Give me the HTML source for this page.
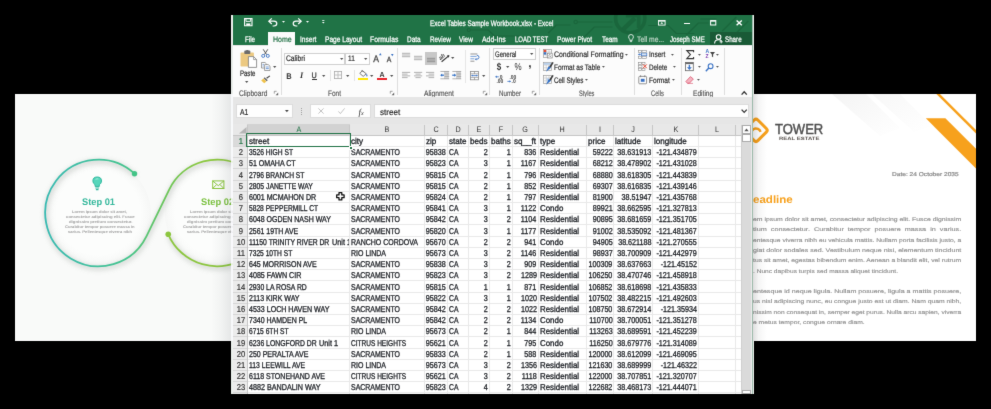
<!DOCTYPE html>
<html><head><meta charset="utf-8"><title>Excel Tables Sample Workbook</title>
<style>
html,body{margin:0;padding:0;background:#000;}
body{width:991px;height:409px;position:relative;overflow:hidden;font-family:"Liberation Sans", sans-serif;}
.t{position:absolute;white-space:nowrap;font-family:"Liberation Sans", sans-serif;text-rendering:geometricPrecision;}
.r{position:absolute;}
svg{position:absolute;overflow:visible;}
#pg{position:absolute;left:0;top:0;width:991px;height:409px;background:#000;overflow:hidden;filter:url(#pgb);}
</style></head><body>
<svg width="0" height="0" style="position:absolute"><filter id="pgb" x="0" y="0" width="100%" height="100%" color-interpolation-filters="sRGB"><feConvolveMatrix order="3" kernelMatrix="0.0074 0.0713 0.0074 0.0713 0.6853 0.0713 0.0074 0.0713 0.0074" edgeMode="duplicate" preserveAlpha="true"/></filter></svg>
<div id="pg">
<div class="r" style="left:231.20px;top:14.90px;width:522.50px;height:379.30px;background:#eaefeb;"></div>
<div class="r" style="left:15.00px;top:94.00px;width:225.00px;height:247.20px;background:#f9faf9;"></div>
<svg style="left:15px;top:94px;overflow:hidden" width="225" height="247.2" viewBox="15 94 225 247.2">
<defs>
<linearGradient id="g1" gradientUnits="userSpaceOnUse" x1="45" y1="0" x2="240" y2="0">
<stop offset="0" stop-color="#38bab2"/><stop offset="0.42" stop-color="#45c48e"/><stop offset="0.62" stop-color="#6cc65a"/><stop offset="0.8" stop-color="#8bc83f"/><stop offset="1" stop-color="#8dc63f"/></linearGradient>
<filter id="sh" x="-20%" y="-20%" width="140%" height="140%"><feGaussianBlur stdDeviation="2.4"/></filter>
<radialGradient id="disc"><stop offset="0.8" stop-color="#fcfdfc"/><stop offset="1" stop-color="#f6f7f6"/></radialGradient>
</defs>
<circle cx="98.5" cy="213.0" r="52.3" fill="url(#disc)"/>
<circle cx="217.1" cy="213.0" r="52.3" fill="url(#disc)"/>
<g fill="none" stroke="#c9cec9" stroke-width="3.4" filter="url(#sh)" opacity="0.9" transform="translate(0.8,1.8)"><path d="M134.51 173.70 A53.3 53.3 0 1 0 146.41 236.36 L169.19 189.64 A53.3 53.3 0 0 1 247.10 168.94"/><path d="M168.23 234.28 A53.3 53.3 0 0 0 247.10 257.06"/></g>
<path d="M134.51 173.70 A53.3 53.3 0 1 0 146.41 236.36 L169.19 189.64 A53.3 53.3 0 0 1 247.10 168.94" fill="none" stroke="url(#g1)" stroke-width="1.8" stroke-linecap="round"/>
<path d="M168.23 234.28 A53.3 53.3 0 0 0 247.10 257.06" fill="none" stroke="#8cc63f" stroke-width="1.8" stroke-linecap="round"/>
<circle cx="134.51" cy="173.70" r="2.7" fill="#43c487"/>
<circle cx="168.23" cy="234.28" r="2.8" fill="#8cc63f"/>
<!-- bulb -->
<g transform="translate(97.2,182.6)" stroke="#2fb89e" stroke-width="1.0">
<path d="M0 -5.6 Q4.3 -5.6 4.3 -1.6 Q4.3 0.8 2.1 2.2 V3.8 H-2.1 V2.2 Q-4.3 0.8 -4.3 -1.6 Q-4.3 -5.6 0 -5.6 Z" fill="#56d6bb"/>
<path d="M-1.9 5.4 H1.9 M-1.3 7 H1.3" fill="none" stroke-width="1.1"/>
<path d="M-1.6 -3.2 Q-0.2 -4.2 1.2 -3.6" fill="none" stroke="#b8f0e2" stroke-width="0.8"/></g>
<!-- envelope -->
<g transform="translate(218.3,184.7)" fill="none" stroke="#8cc63f" stroke-width="1.0">
<rect x="-5.6" y="-3.8" width="11.2" height="7.6"/><path d="M-5.6 -3.8 L0 1 L5.6 -3.8 M-5.6 3.8 L-1.6 -0.2 M5.6 3.8 L1.6 -0.2"/></g>
</svg>
<div class="t" style="top:196.00px;height:14px;line-height:14px;font-size:9.5px;color:#35b89c;font-weight:bold;left:82.40px;transform-origin:0 50%;transform:scaleX(0.977);">Step 01</div>
<div class="t" style="top:196.00px;height:14px;line-height:14px;font-size:9.5px;color:#7dc242;font-weight:bold;left:201.10px;transform-origin:0 50%;transform:scaleX(0.983);">Step 02</div>
<div class="t" style="top:208.00px;height:8px;line-height:8px;font-size:3.8px;color:#a0a0a0;font-weight:bold;left:71.60px;transform-origin:0 50%;transform:scaleX(1.081);">Lorem ipsum dolor sit amet,</div>
<div class="t" style="top:208.00px;height:8px;line-height:8px;font-size:3.8px;color:#a0a0a0;font-weight:bold;left:190.20px;transform-origin:0 50%;transform:scaleX(1.081);">Lorem ipsum dolor sit amet,</div>
<div class="t" style="top:213.00px;height:8px;line-height:8px;font-size:3.8px;color:#a0a0a0;font-weight:bold;left:65.50px;transform-origin:0 50%;transform:scaleX(1.126);">consectetur adipiscing elit. Fusce</div>
<div class="t" style="top:213.00px;height:8px;line-height:8px;font-size:3.8px;color:#a0a0a0;font-weight:bold;left:184.10px;transform-origin:0 50%;transform:scaleX(1.126);">consectetur adipiscing elit. Fusce</div>
<div class="t" style="top:218.00px;height:8px;line-height:8px;font-size:3.8px;color:#a0a0a0;font-weight:bold;left:68.60px;transform-origin:0 50%;transform:scaleX(1.131);">dignissim pretium consectetur.</div>
<div class="t" style="top:218.00px;height:8px;line-height:8px;font-size:3.8px;color:#a0a0a0;font-weight:bold;left:187.20px;transform-origin:0 50%;transform:scaleX(1.131);">dignissim pretium consectetur.</div>
<div class="t" style="top:223.00px;height:8px;line-height:8px;font-size:3.8px;color:#a0a0a0;font-weight:bold;left:64.60px;transform-origin:0 50%;transform:scaleX(1.084);">Curabitur tempor posuere massa in</div>
<div class="t" style="top:223.00px;height:8px;line-height:8px;font-size:3.8px;color:#a0a0a0;font-weight:bold;left:183.20px;transform-origin:0 50%;transform:scaleX(1.084);">Curabitur tempor posuere massa in</div>
<div class="t" style="top:228.00px;height:8px;line-height:8px;font-size:3.8px;color:#a0a0a0;font-weight:bold;left:68.00px;transform-origin:0 50%;transform:scaleX(1.08);">varius. Pellentesque viverra nibh</div>
<div class="t" style="top:228.00px;height:8px;line-height:8px;font-size:3.8px;color:#a0a0a0;font-weight:bold;left:186.60px;transform-origin:0 50%;transform:scaleX(1.08);">varius. Pellentesque viverra nibh</div>
<div class="r" style="left:745.00px;top:94.00px;width:231.40px;height:247.10px;background:#ffffff;"></div>
<svg style="left:745px;top:94px;overflow:hidden" width="231.4" height="247.1" viewBox="745 94 231.4 247.1">
<defs><linearGradient id="gb" x1="0" y1="0" x2="1" y2="1"><stop offset="0" stop-color="#e9e9e9"/><stop offset="1" stop-color="#ffffff"/></linearGradient></defs>
<polygon points="832,94 866,94 900,128 880,136" fill="url(#gb)" opacity="0.5"/>
<polygon points="872,94 900,94 932,126 914,132" fill="url(#gb)" opacity="0.35"/>
<polygon points="936.4,94 939.9,94 980,134.1 980,137.6" fill="#f7a11d"/>
<polygon points="925.8,118.2 945.4,118.2 980,152.8 980,172.4" fill="#f7a11d"/>
<!-- logo -->
<g transform="translate(756.0,130.3)" fill="none" stroke="#f7a11d" stroke-width="3">
<rect x="-8.6" y="-8.6" width="17.2" height="17.2" rx="2.6" transform="rotate(45)"/>
<path d="M-5 3 Q-3 -3.4 2 -1.4 Q4 -0.4 4.6 1.6" stroke-width="2.4"/>
</g>
</svg>
<div class="t" style="top:121.00px;height:18px;line-height:18px;font-size:14.5px;color:#4f4f4f;left:774.80px;transform-origin:0 50%;transform:scaleX(0.898);-webkit-text-stroke:0.45px #4f4f4f;">TOWER</div>
<div class="t" style="top:134.00px;height:9px;line-height:9px;font-size:4.6px;color:#5c5652;font-weight:bold;left:778.60px;transform-origin:0 50%;transform:scaleX(1.296);">REAL ESTATE</div>
<div class="t" style="top:170.00px;height:10px;line-height:10px;font-size:5.6px;color:#8a8a8a;left:891.60px;transform-origin:0 50%;transform:scaleX(1.177);-webkit-text-stroke:0.2px #8a8a8a;">Date: 24 October 2035</div>
<div class="t" style="top:193.00px;height:15px;line-height:15px;font-size:10.6px;color:#f7a11d;font-weight:bold;left:752.80px;transform-origin:0 50%;transform:scaleX(1.09);">eadline</div>
<div class="t" style="top:216.00px;height:9px;line-height:9px;font-size:5.4px;color:#8c8c8c;left:753.00px;transform-origin:0 50%;transform:scaleX(1.273);white-space:pre;-webkit-text-stroke:0.12px #8c8c8c;">em ipsum dolor sit amet, consectetur adipiscing elit. Fusce dignissim</div>
<div class="t" style="top:226.00px;height:9px;line-height:9px;font-size:5.4px;color:#8c8c8c;left:753.00px;transform-origin:0 50%;transform:scaleX(1.347);white-space:pre;-webkit-text-stroke:0.12px #8c8c8c;">tium  consectetur.  Curabitur  tempor  posuere  massa  in  varius.</div>
<div class="t" style="top:237.00px;height:9px;line-height:9px;font-size:5.4px;color:#8c8c8c;left:753.00px;transform-origin:0 50%;transform:scaleX(1.243);white-space:pre;-webkit-text-stroke:0.12px #8c8c8c;">entesque viverra nibh eu vehicula mattis. Nullam porta facilisis justo, a</div>
<div class="t" style="top:247.00px;height:9px;line-height:9px;font-size:5.4px;color:#8c8c8c;left:753.00px;transform-origin:0 50%;transform:scaleX(1.309);white-space:pre;-webkit-text-stroke:0.12px #8c8c8c;">giat dolor sodales sed. Vestibulum neque nisi, elementum tincidunt</div>
<div class="t" style="top:257.00px;height:9px;line-height:9px;font-size:5.4px;color:#8c8c8c;left:753.00px;transform-origin:0 50%;transform:scaleX(1.252);white-space:pre;-webkit-text-stroke:0.12px #8c8c8c;">tus sit amet, egestas bibendum enim. Aenean a blandit elit, vel rutrum</div>
<div class="t" style="top:268.00px;height:9px;line-height:9px;font-size:5.4px;color:#8c8c8c;left:753.00px;transform-origin:0 50%;transform:scaleX(1.222);white-space:pre;-webkit-text-stroke:0.12px #8c8c8c;">. Nunc dapibus turpis sed massa aliquet tincidunt.</div>
<div class="t" style="top:288.00px;height:9px;line-height:9px;font-size:5.4px;color:#8c8c8c;left:753.00px;transform-origin:0 50%;transform:scaleX(1.321);white-space:pre;-webkit-text-stroke:0.12px #8c8c8c;">entesque id neque ligula. Nullam posuere, ligula a mattis posuere,</div>
<div class="t" style="top:298.00px;height:9px;line-height:9px;font-size:5.4px;color:#8c8c8c;left:753.00px;transform-origin:0 50%;transform:scaleX(1.259);white-space:pre;-webkit-text-stroke:0.12px #8c8c8c;">us nisl adipiscing nunc, eu congue justo est ut diam. Nam quam nibh,</div>
<div class="t" style="top:309.00px;height:9px;line-height:9px;font-size:5.4px;color:#8c8c8c;left:753.00px;transform-origin:0 50%;transform:scaleX(1.228);white-space:pre;-webkit-text-stroke:0.12px #8c8c8c;">nissim non consequat in, semper eget purus. Nulla arcu sapien, viverra</div>
<div class="t" style="top:319.00px;height:9px;line-height:9px;font-size:5.4px;color:#8c8c8c;left:753.00px;transform-origin:0 50%;transform:scaleX(1.246);white-space:pre;-webkit-text-stroke:0.12px #8c8c8c;">e metus tempor, congue ornare diam.</div>
<div class="r" style="left:752.8px;top:94px;width:14px;height:247.1px;background:linear-gradient(90deg,rgba(0,0,0,0.13),rgba(0,0,0,0.04) 40%,rgba(0,0,0,0));"></div>
<div class="r" style="left:211px;top:94px;width:20.2px;height:247.2px;background:linear-gradient(90deg,rgba(20,30,40,0),rgba(20,30,40,0.03) 50%,rgba(20,30,40,0.085));"></div>
<div class="r" style="left:231.30px;top:94.00px;width:2.00px;height:247.20px;background:rgba(248,248,252,0.85);"></div>
<div class="r" style="left:233.30px;top:14.90px;width:519.50px;height:379.00px;background:#e6e6e6;"></div>
<div class="r" style="left:752.00px;top:14.90px;width:0.80px;height:379.00px;background:#9dbaab;"></div>
<div class="r" style="left:233.30px;top:14.90px;width:518.70px;height:30.60px;background:#207346;"></div>
<svg style="left:233.7px;top:15px;overflow:hidden" width="518" height="30.5" viewBox="233.7 15 518 30.5">
<g fill="none" stroke="#1a663c" stroke-width="1.2">
<circle cx="629.9" cy="18.2" r="14.6" stroke-width="3.6"/>
<path d="M622.6 29.6 L634.6 18.2" stroke-width="4.4"/>
<path d="M625.6 15.8 H638.4 V28" stroke-width="3.6"/>
<path d="M577 22 H612"/>
<circle cx="575.4" cy="22" r="1.7"/>
<path d="M584 37 L594 27 H612"/>
<path d="M548 33 L556 25 H570"/>
<path d="M470 30 H488 L494 36 H520"/>
<circle cx="468.5" cy="30" r="1.5"/>
<path d="M648 25.5 H668 L676 33.5 H694"/>
<path d="M686 35 L698 23 H708"/>
<path d="M722 31 L736 17 "/>
<path d="M736 33 L748 21 "/>
<path d="M700 19 H716"/>
</g></svg>
<div class="r" style="left:268.40px;top:32.30px;width:26.60px;height:13.30px;background:#fbfbfb;"></div>
<div class="t" style="top:34.00px;height:12px;line-height:12px;font-size:8px;color:#fff;left:244.70px;transform-origin:0 50%;transform:scaleX(0.776);-webkit-text-stroke:0.25px #fff;">File</div>
<div class="t" style="top:34.00px;height:12px;line-height:12px;font-size:8px;color:#1e6e42;left:272.60px;transform-origin:0 50%;transform:scaleX(0.876);-webkit-text-stroke:0.2px #1e6e42;">Home</div>
<div class="t" style="top:34.00px;height:12px;line-height:12px;font-size:8px;color:#fff;left:299.80px;transform-origin:0 50%;transform:scaleX(0.82);-webkit-text-stroke:0.25px #fff;">Insert</div>
<div class="t" style="top:34.00px;height:12px;line-height:12px;font-size:8px;color:#fff;left:324.60px;transform-origin:0 50%;transform:scaleX(0.824);-webkit-text-stroke:0.25px #fff;">Page Layout</div>
<div class="t" style="top:34.00px;height:12px;line-height:12px;font-size:8px;color:#fff;left:370.30px;transform-origin:0 50%;transform:scaleX(0.849);-webkit-text-stroke:0.25px #fff;">Formulas</div>
<div class="t" style="top:34.00px;height:12px;line-height:12px;font-size:8px;color:#fff;left:407.00px;transform-origin:0 50%;transform:scaleX(0.805);-webkit-text-stroke:0.25px #fff;">Data</div>
<div class="t" style="top:34.00px;height:12px;line-height:12px;font-size:8px;color:#fff;left:429.50px;transform-origin:0 50%;transform:scaleX(0.789);-webkit-text-stroke:0.25px #fff;">Review</div>
<div class="t" style="top:34.00px;height:12px;line-height:12px;font-size:8px;color:#fff;left:459.30px;transform-origin:0 50%;transform:scaleX(0.803);-webkit-text-stroke:0.25px #fff;">View</div>
<div class="t" style="top:34.00px;height:12px;line-height:12px;font-size:8px;color:#fff;left:482.10px;transform-origin:0 50%;transform:scaleX(0.86);-webkit-text-stroke:0.25px #fff;">Add-Ins</div>
<div class="t" style="top:34.00px;height:12px;line-height:12px;font-size:8px;color:#fff;left:515.00px;transform-origin:0 50%;transform:scaleX(0.749);-webkit-text-stroke:0.25px #fff;">LOAD TEST</div>
<div class="t" style="top:34.00px;height:12px;line-height:12px;font-size:8px;color:#fff;left:557.40px;transform-origin:0 50%;transform:scaleX(0.822);-webkit-text-stroke:0.25px #fff;">Power Pivot</div>
<div class="t" style="top:34.00px;height:12px;line-height:12px;font-size:8px;color:#fff;left:601.50px;transform-origin:0 50%;transform:scaleX(0.803);-webkit-text-stroke:0.25px #fff;">Team</div>
<div class="t" style="top:18.00px;height:12px;line-height:12px;font-size:8px;color:#fff;left:430.30px;transform-origin:0 50%;transform:scaleX(0.797);-webkit-text-stroke:0.25px #fff;">Excel Tables Sample Workbook.xlsx - Excel</div>
<svg style="left:244px;top:18.2px" width="8.6" height="8.4" viewBox="0 0 8.6 8.4">
<path d="M0.6 0.6 H8 V7.8 H0.6 Z" fill="none" stroke="#fff" stroke-width="1.1"/>
<path d="M2 0.8 V3.4 H6.6 V0.8" fill="none" stroke="#fff" stroke-width="0.9"/>
<rect x="2.2" y="5.4" width="4.2" height="2.2" fill="#fff"/></svg>
<svg style="left:268.2px;top:17.6px" width="10" height="8.6" viewBox="0 0 10 8.6">
<path d="M1.2 3.2 H6 Q8.8 3.2 8.8 5.6 Q8.8 8 6 8 H4.6" fill="none" stroke="#fff" stroke-width="1.2"/>
<path d="M3.8 0.4 L0.8 3.2 L3.8 6" fill="none" stroke="#fff" stroke-width="1.2"/></svg>
<svg style="left:292.2px;top:17.6px" width="10" height="8.6" viewBox="0 0 10 8.6">
<path d="M8.8 3.2 H4 Q1.2 3.2 1.2 5.6 Q1.2 8 4 8 H5.4" fill="none" stroke="#fff" stroke-width="1.2"/>
<path d="M6.2 0.4 L9.2 3.2 L6.2 6" fill="none" stroke="#fff" stroke-width="1.2"/></svg>
<svg style="left:281.6px;top:20.8px" width="3" height="2" viewBox="0 0 3 2"><path d="M0 0 H3 L1.5 1.8 Z" fill="#fff"/></svg>
<svg style="left:306.2px;top:20.8px" width="3" height="2" viewBox="0 0 3 2"><path d="M0 0 H3 L1.5 1.8 Z" fill="#fff"/></svg>
<svg style="left:321.8px;top:20.2px" width="2.6" height="4" viewBox="0 0 2.6 4"><path d="M0.2 0.5 H2.4" stroke="#fff" stroke-width="0.8"/><path d="M0 2 H2.6 L1.3 3.6 Z" fill="#fff"/></svg>
<svg style="left:627.6px;top:34.2px" width="6" height="9" viewBox="0 0 6 9">
<path d="M3 0.5 Q5.4 0.5 5.4 2.9 Q5.4 4.2 4.2 5.2 V6.4 H1.8 V5.2 Q0.6 4.2 0.6 2.9 Q0.6 0.5 3 0.5 Z" fill="none" stroke="#fff" stroke-width="0.8"/>
<path d="M1.9 7.6 H4.1" stroke="#fff" stroke-width="0.8"/></svg>
<div class="t" style="top:34.00px;height:12px;line-height:12px;font-size:8px;color:#c2d8ca;left:637.00px;transform-origin:0 50%;transform:scaleX(0.844);-webkit-text-stroke:0.2px #c2d8ca;">Tell me...</div>
<div class="t" style="top:34.00px;height:12px;line-height:12px;font-size:8px;color:#fff;left:670.20px;transform-origin:0 50%;transform:scaleX(0.767);-webkit-text-stroke:0.25px #fff;">Joseph SME</div>
<div class="r" style="left:710.40px;top:32.40px;width:41.60px;height:13.10px;background:#195a36;"></div>
<svg style="left:713.6px;top:33.6px" width="9.6" height="10" viewBox="0 0 9.6 10">
<circle cx="4.6" cy="3" r="2.3" fill="none" stroke="#fff" stroke-width="1.1"/>
<path d="M0.6 9.6 Q0.6 5.8 4.6 5.8 Q6.6 5.8 7.4 6.8" fill="none" stroke="#fff" stroke-width="1.1"/>
<path d="M7.2 6.2 V9.4 M5.6 7.8 H8.8" stroke="#fff" stroke-width="0.9"/></svg>
<div class="t" style="top:34.00px;height:12px;line-height:12px;font-size:8px;color:#fff;left:725.00px;transform-origin:0 50%;transform:scaleX(0.778);-webkit-text-stroke:0.25px #fff;">Share</div>
<svg style="left:658px;top:19.6px" width="7.6" height="5.6" viewBox="0 0 7.6 5.6">
<rect x="0.5" y="0.5" width="6.6" height="4.6" fill="none" stroke="#fff" stroke-width="0.9"/>
<path d="M0.5 1.2 H7.1" stroke="#fff" stroke-width="0.9"/>
<path d="M3.8 1.9 L5.2 3.8 H2.4 Z" fill="#fff"/></svg>
<div class="r" style="left:684.30px;top:22.50px;width:6.20px;height:1.40px;background:#fff;"></div>
<svg style="left:710.4px;top:19.6px" width="6.4" height="5.6" viewBox="0 0 6.4 5.6"><rect x="0.6" y="0.6" width="5.2" height="4.4" fill="none" stroke="#fff" stroke-width="1"/><path d="M0.6 1 H5.8" stroke="#fff" stroke-width="1.3"/></svg>
<svg style="left:736.2px;top:19.6px" width="6.4" height="5.6" viewBox="0 0 6.4 5.6"><path d="M0.6 0.4 L5.8 5.2 M5.8 0.4 L0.6 5.2" stroke="#fff" stroke-width="1.4"/></svg>
<div class="r" style="left:233.30px;top:45.50px;width:518.70px;height:51.70px;background:#fcfcfc;"></div>
<div class="t" style="top:88.00px;height:12px;line-height:12px;font-size:8px;color:#505050;left:238.60px;transform-origin:0 50%;transform:scaleX(0.827);-webkit-text-stroke:0.15px #505050;">Clipboard</div>
<div class="t" style="top:88.00px;height:12px;line-height:12px;font-size:8px;color:#505050;left:328.20px;transform-origin:0 50%;transform:scaleX(0.812);-webkit-text-stroke:0.15px #505050;">Font</div>
<div class="t" style="top:88.00px;height:12px;line-height:12px;font-size:8px;color:#505050;left:424.30px;transform-origin:0 50%;transform:scaleX(0.838);-webkit-text-stroke:0.15px #505050;">Alignment</div>
<div class="t" style="top:88.00px;height:12px;line-height:12px;font-size:8px;color:#505050;left:498.90px;transform-origin:0 50%;transform:scaleX(0.777);-webkit-text-stroke:0.15px #505050;">Number</div>
<div class="t" style="top:88.00px;height:12px;line-height:12px;font-size:8px;color:#505050;left:578.90px;transform-origin:0 50%;transform:scaleX(0.707);-webkit-text-stroke:0.15px #505050;">Styles</div>
<div class="t" style="top:88.00px;height:12px;line-height:12px;font-size:8px;color:#505050;left:651.00px;transform-origin:0 50%;transform:scaleX(0.72);-webkit-text-stroke:0.15px #505050;">Cells</div>
<div class="t" style="top:88.00px;height:12px;line-height:12px;font-size:8px;color:#505050;left:692.60px;transform-origin:0 50%;transform:scaleX(0.826);-webkit-text-stroke:0.15px #505050;">Editing</div>
<div class="r" style="left:280.90px;top:48.00px;width:0.80px;height:47.00px;background:#dedede;"></div>
<div class="r" style="left:397.00px;top:48.00px;width:0.80px;height:47.00px;background:#dedede;"></div>
<div class="r" style="left:489.40px;top:48.00px;width:0.80px;height:47.00px;background:#dedede;"></div>
<div class="r" style="left:539.10px;top:48.00px;width:0.80px;height:47.00px;background:#dedede;"></div>
<div class="r" style="left:634.10px;top:48.00px;width:0.80px;height:47.00px;background:#dedede;"></div>
<div class="r" style="left:680.90px;top:48.00px;width:0.80px;height:47.00px;background:#dedede;"></div>
<div class="r" style="left:724.20px;top:48.00px;width:0.80px;height:47.00px;background:#dedede;"></div>
<svg style="left:274.30px;top:91.10px" width="4.4" height="4.4" viewBox="0 0 4.4 4.4"><path d="M0.3 0.3 H2.6 M0.3 0.3 V2.6" stroke="#777" stroke-width="0.7" fill="none"/><path d="M4.2 1.6 V4.2 H1.6 Z" fill="#666"/></svg>
<svg style="left:390.40px;top:91.10px" width="4.4" height="4.4" viewBox="0 0 4.4 4.4"><path d="M0.3 0.3 H2.6 M0.3 0.3 V2.6" stroke="#777" stroke-width="0.7" fill="none"/><path d="M4.2 1.6 V4.2 H1.6 Z" fill="#666"/></svg>
<svg style="left:483.30px;top:91.10px" width="4.4" height="4.4" viewBox="0 0 4.4 4.4"><path d="M0.3 0.3 H2.6 M0.3 0.3 V2.6" stroke="#777" stroke-width="0.7" fill="none"/><path d="M4.2 1.6 V4.2 H1.6 Z" fill="#666"/></svg>
<svg style="left:532.20px;top:91.10px" width="4.4" height="4.4" viewBox="0 0 4.4 4.4"><path d="M0.3 0.3 H2.6 M0.3 0.3 V2.6" stroke="#777" stroke-width="0.7" fill="none"/><path d="M4.2 1.6 V4.2 H1.6 Z" fill="#666"/></svg>
<svg style="left:240.00px;top:50.00px" width="17" height="18" viewBox="0 0 17 18">
<rect x="0.5" y="2.6" width="13.4" height="14" rx="0.8" fill="#ecc981"/>
<rect x="4.3" y="0.6" width="6" height="3.4" rx="0.8" fill="#6b6b6b"/>
<rect x="6.1" y="0" width="2.4" height="1.6" rx="0.8" fill="#6b6b6b"/>
<path d="M8.4 6.6 H13.6 L16.6 9.6 V17.4 H8.4 Z" fill="#fff" stroke="#7a7a7a" stroke-width="0.8"/>
<path d="M13.6 6.6 V9.6 H16.6" fill="none" stroke="#7a7a7a" stroke-width="0.7"/>
</svg>
<div class="t" style="top:68.00px;height:12px;line-height:12px;font-size:8px;color:#2b2b2b;left:239.60px;transform-origin:0 50%;transform:scaleX(0.753);-webkit-text-stroke:0.2px #2b2b2b;">Paste</div>
<svg style="left:245.40px;top:80.80px" width="3.4" height="2.0" viewBox="0 0 3.4 2.0"><path d="M0 0 L3.4 0 L1.7 2.0 Z" fill="#555"/></svg>
<svg style="left:261.00px;top:49.30px" width="9" height="9" viewBox="0 0 9 9">
<path d="M2.2 0.3 L5.6 5.6 M6.8 0.3 L3.4 5.6" stroke="#555" stroke-width="1" fill="none"/>
<circle cx="2.2" cy="6.9" r="1.5" fill="none" stroke="#3a72c4" stroke-width="0.9"/>
<circle cx="6.8" cy="6.9" r="1.5" fill="none" stroke="#3a72c4" stroke-width="0.9"/>
</svg>
<svg style="left:260.50px;top:62.30px" width="10" height="9" viewBox="0 0 10 9">
<path d="M0.5 0.5 H4 L5.6 2 V6 H0.5 Z" fill="#fff" stroke="#777" stroke-width="0.7"/>
<path d="M3.6 2.6 H7.2 L9 4.2 V8.5 H3.6 Z" fill="#fff" stroke="#777" stroke-width="0.7"/>
<path d="M4.8 5 H7.8 M4.8 6.6 H7.8" stroke="#3a72c4" stroke-width="0.7"/>
<path d="M1.5 2.4 H3 M1.5 4 H3" stroke="#3a72c4" stroke-width="0.6"/>
</svg>
<svg style="left:273.00px;top:65.70px" width="3.4" height="2.0" viewBox="0 0 3.4 2.0"><path d="M0 0 L3.4 0 L1.7 2.0 Z" fill="#555"/></svg>
<svg style="left:261.20px;top:75.20px" width="9.4" height="8.4" viewBox="0 0 9.4 8.4">
<path d="M5.2 2.8 L8.6 0.4 L9.2 1.3 L6 3.8 Z" fill="#444"/>
<path d="M3.6 2.2 L6.8 5.2 L5.6 6.2 L2.6 3.2 Z" fill="#666"/>
<path d="M2.4 3.4 L5.4 6.4 L3.2 8.2 L0.2 5.4 Z" fill="#f0c24a"/>
</svg>
<div class="r" style="left:283.80px;top:52.50px;width:61.50px;height:12.00px;background:#fff;border:0.7px solid #d0d0d0;box-sizing:border-box;"></div>
<div class="r" style="left:345.30px;top:52.50px;width:24.70px;height:12.00px;background:#fff;border:0.7px solid #d0d0d0;box-sizing:border-box;"></div>
<div class="t" style="top:53.00px;height:12px;line-height:12px;font-size:8px;color:#2b2b2b;left:285.80px;transform-origin:0 50%;transform:scaleX(0.842);-webkit-text-stroke:0.2px #2b2b2b;">Calibri</div>
<div class="t" style="top:53.00px;height:12px;line-height:12px;font-size:8px;color:#2b2b2b;left:348.00px;transform-origin:0 50%;transform:scaleX(0.819);-webkit-text-stroke:0.2px #2b2b2b;">11</div>
<svg style="left:340.20px;top:57.60px" width="3.4" height="2.0" viewBox="0 0 3.4 2.0"><path d="M0 0 L3.4 0 L1.7 2.0 Z" fill="#555"/></svg>
<svg style="left:364.20px;top:57.60px" width="3.4" height="2.0" viewBox="0 0 3.4 2.0"><path d="M0 0 L3.4 0 L1.7 2.0 Z" fill="#555"/></svg>
<div class="t" style="top:53.00px;height:14px;line-height:14px;font-size:9.5px;color:#444;left:276.20px;width:200px;text-align:center;transform-origin:50% 50%;transform:scaleX(0.9);-webkit-text-stroke:0.3px #444;">A</div>
<svg style="left:378.80px;top:53.40px" width="2.6" height="2.2" viewBox="0 0 2.6 2.2"><path d="M0 2.2 L1.3 0 L2.6 2.2 Z" fill="#3a72c4"/></svg>
<div class="t" style="top:54.00px;height:12px;line-height:12px;font-size:7.6px;color:#444;left:288.70px;width:200px;text-align:center;transform-origin:50% 50%;transform:scaleX(0.9);-webkit-text-stroke:0.3px #444;">A</div>
<svg style="left:390.80px;top:53.80px" width="2.6" height="2.2" viewBox="0 0 2.6 2.2"><path d="M0 0 L2.6 0 L1.3 2.2 Z" fill="#3a72c4"/></svg>
<div class="t" style="top:70.00px;height:12px;line-height:12px;font-size:8.3px;color:#333;font-weight:bold;left:189.30px;width:200px;text-align:center;transform-origin:50% 50%;transform:scaleX(0.9);">B</div>
<div class="t" style="top:70.00px;height:12px;line-height:12px;font-size:8.3px;color:#333;font-style:italic;left:201.60px;width:200px;text-align:center;transform-origin:50% 50%;font-family:'Liberation Serif',serif;font-weight:bold;">I</div>
<div class="t" style="top:70.00px;height:12px;line-height:12px;font-size:8px;color:#333;left:214.20px;width:200px;text-align:center;transform-origin:50% 50%;transform:scaleX(0.9);-webkit-text-stroke:0.25px #333;">U</div>
<div class="r" style="left:311.60px;top:79.00px;width:5.20px;height:0.70px;background:#333;"></div>
<svg style="left:322.10px;top:74.90px" width="3.4" height="2.0" viewBox="0 0 3.4 2.0"><path d="M0 0 L3.4 0 L1.7 2.0 Z" fill="#555"/></svg>
<div class="r" style="left:329.70px;top:69.50px;width:0.70px;height:11.80px;background:#e4e4e4;"></div>
<svg style="left:334.40px;top:71.30px" width="8" height="8" viewBox="0 0 8 8"><rect x="0.4" y="0.4" width="7.2" height="7.2" fill="none" stroke="#a8a8a8" stroke-width="0.8"/><path d="M4 0.4 V7.6 M0.4 4 H7.6" stroke="#b4b4b4" stroke-width="0.8"/></svg>
<svg style="left:346.40px;top:74.90px" width="3.4" height="2.0" viewBox="0 0 3.4 2.0"><path d="M0 0 L3.4 0 L1.7 2.0 Z" fill="#555"/></svg>
<div class="r" style="left:353.70px;top:69.50px;width:0.70px;height:11.80px;background:#e4e4e4;"></div>
<svg style="left:358.60px;top:70.40px" width="9.4" height="7" viewBox="0 0 9.4 7">
<path d="M3.4 0.6 L7.2 3.8 L4.2 6.4 L0.8 3.4 Z" fill="#fff" stroke="#555" stroke-width="0.8"/>
<path d="M2.6 0.2 L4.4 2.2" stroke="#555" stroke-width="0.7"/>
<path d="M7.6 3.6 Q9.2 5.6 8.2 6.4 Q7.2 6.6 7.2 5.4 Z" fill="#3a72c4"/>
</svg>
<div class="r" style="left:357.80px;top:77.60px;width:9.90px;height:2.30px;background:#ffe600;"></div>
<svg style="left:370.30px;top:74.90px" width="3.4" height="2.0" viewBox="0 0 3.4 2.0"><path d="M0 0 L3.4 0 L1.7 2.0 Z" fill="#555"/></svg>
<div class="t" style="top:69.00px;height:11px;line-height:11px;font-size:7.4px;color:#333;font-weight:bold;left:282.20px;width:200px;text-align:center;transform-origin:50% 50%;transform:scaleX(0.95);">A</div>
<div class="r" style="left:377.00px;top:77.60px;width:9.60px;height:2.30px;background:#e8222a;"></div>
<svg style="left:389.50px;top:74.90px" width="3.4" height="2.0" viewBox="0 0 3.4 2.0"><path d="M0 0 L3.4 0 L1.7 2.0 Z" fill="#555"/></svg>
<div class="r" style="left:424.50px;top:52.10px;width:12.40px;height:12.60px;background:#c8c8c8;"></div>
<svg style="left:400.80px;top:50.20px" width="10.2" height="10" viewBox="-5.1 -5 10.2 10"><path d="M-4.10 -1.70 h8.2 M-4.10 0.00 h8.2 M-4.10 1.70 h8.2 " stroke="#a8a8a8" stroke-width="0.9" fill="none"/></svg>
<svg style="left:413.10px;top:52.70px" width="10.2" height="10" viewBox="-5.1 -5 10.2 10"><path d="M-4.10 -1.70 h8.2 M-4.10 0.00 h8.2 M-4.10 1.70 h8.2 " stroke="#a8a8a8" stroke-width="0.9" fill="none"/></svg>
<svg style="left:425.60px;top:55.40px" width="10.2" height="10" viewBox="-5.1 -5 10.2 10"><path d="M-4.10 -1.70 h8.2 M-4.10 0.00 h8.2 M-4.10 1.70 h8.2 " stroke="#8a8a8a" stroke-width="0.9" fill="none"/></svg>
<svg style="left:440.00px;top:53.00px" width="10" height="9.4" viewBox="0 0 10 9.4"><path d="M1.6 8.8 L9 2.6" stroke="#333" stroke-width="1.1" fill="none"/><path d="M9.4 2.2 L6.8 2.6 L8.8 4.8 Z" fill="#333"/><text x="-0.6" y="5.4" font-size="5.6" font-style="italic" font-weight="bold" fill="#444" font-family="Liberation Sans" transform="rotate(-40 2.5 5)">ab</text></svg>
<svg style="left:451.00px;top:57.20px" width="3.4" height="2.0" viewBox="0 0 3.4 2.0"><path d="M0 0 L3.4 0 L1.7 2.0 Z" fill="#555"/></svg>
<div class="r" style="left:465.20px;top:49.50px;width:0.70px;height:33.00px;background:#e6e6e6;"></div>
<svg style="left:469.80px;top:52.80px" width="9.6" height="9.4" viewBox="0 0 9.6 9.4">
<path d="M0.4 1 H7.4 M0.4 8.2 H4.4" stroke="#8a8a8a" stroke-width="0.9"/>
<path d="M0.4 3.4 H6.6 M0.4 5.8 H4.4" stroke="#6f9bd6" stroke-width="0.9"/>
<path d="M6.8 2.2 Q9.2 2.4 9 4.6 Q8.8 6.2 6.6 6.2 H5.6" stroke="#3a72c4" stroke-width="0.9" fill="none"/>
<path d="M6.4 4.9 L4.9 6.2 L6.4 7.5 Z" fill="#3a72c4"/>
</svg>
<svg style="left:400.80px;top:70.40px" width="10.2" height="10" viewBox="-5.1 -5 10.2 10"><path d="M-4.10 -2.62 h8.2 M-4.10 -0.88 h5.6 M-4.10 0.88 h8.2 M-4.10 2.62 h5.6 " stroke="#a8a8a8" stroke-width="0.9" fill="none"/></svg>
<svg style="left:413.10px;top:70.40px" width="10.2" height="10" viewBox="-5.1 -5 10.2 10"><path d="M-4.10 -2.62 h8.2 M-2.60 -0.88 h5.2 M-4.10 0.88 h8.2 M-2.60 2.62 h5.2 " stroke="#a8a8a8" stroke-width="0.9" fill="none"/></svg>
<svg style="left:425.40px;top:70.40px" width="10.2" height="10" viewBox="-5.1 -5 10.2 10"><path d="M-4.10 -2.62 h8.2 M-1.50 -0.88 h5.6 M-4.10 0.88 h8.2 M-1.50 2.62 h5.6 " stroke="#a8a8a8" stroke-width="0.9" fill="none"/></svg>
<div class="r" style="left:443.80px;top:71.20px;width:5.10px;height:8.20px;background:#d2d2d2;"></div>
<div class="r" style="left:456.40px;top:71.20px;width:4.90px;height:8.20px;background:#d2d2d2;"></div>
<svg style="left:439.60px;top:71.20px" width="9.4" height="8.2" viewBox="0 0 9.4 8.2"><path d="M0.4 0.5 H9.2 M4.6 3 H9.2 M4.6 5.4 H9.2 M0.4 7.8 H9.2" stroke="#a0a0a0" stroke-width="0.8"/><path d="M4 4.2 H1.4" stroke="#2f6fc6" stroke-width="1.2"/><path d="M2.2 2.6 L0.2 4.2 L2.2 5.8 Z" fill="#2f6fc6"/></svg>
<svg style="left:452.00px;top:71.20px" width="9.4" height="8.2" viewBox="0 0 9.4 8.2"><path d="M0.4 0.5 H9.2 M4.8 3 H9.2 M4.8 5.4 H9.2 M0.4 7.8 H9.2" stroke="#a0a0a0" stroke-width="0.8"/><path d="M0.2 4.2 H2.8" stroke="#2f6fc6" stroke-width="1.2"/><path d="M2.2 2.6 L4.2 4.2 L2.2 5.8 Z" fill="#2f6fc6"/></svg>
<svg style="left:469.60px;top:70.80px" width="9" height="9.2" viewBox="0 0 9 9.2">
<rect x="0.4" y="0.4" width="8.2" height="8.4" fill="#fff" stroke="#8a8a8a" stroke-width="0.8"/>
<path d="M0.4 2.8 H8.6 M0.4 6.4 H8.6 M4.5 0.4 V2.8 M4.5 6.4 V8.8" stroke="#8a8a8a" stroke-width="0.7"/>
<path d="M1.6 4.6 H7.4" stroke="#3a72c4" stroke-width="0.8"/>
<path d="M2.6 3.6 L1.2 4.6 L2.6 5.6 Z M6.4 3.6 L7.8 4.6 L6.4 5.6 Z" fill="#3a72c4"/>
</svg>
<svg style="left:481.70px;top:74.90px" width="3.4" height="2.0" viewBox="0 0 3.4 2.0"><path d="M0 0 L3.4 0 L1.7 2.0 Z" fill="#555"/></svg>
<div class="r" style="left:493.20px;top:47.70px;width:42.90px;height:12.50px;background:#fff;border:0.7px solid #d0d0d0;box-sizing:border-box;"></div>
<div class="t" style="top:49.00px;height:12px;line-height:12px;font-size:8px;color:#2b2b2b;left:495.40px;transform-origin:0 50%;transform:scaleX(0.752);-webkit-text-stroke:0.2px #2b2b2b;">General</div>
<svg style="left:530.40px;top:53.40px" width="3.4" height="2.0" viewBox="0 0 3.4 2.0"><path d="M0 0 L3.4 0 L1.7 2.0 Z" fill="#555"/></svg>
<div class="t" style="top:61.00px;height:14px;line-height:14px;font-size:10px;color:#333;font-weight:bold;left:399.20px;width:200px;text-align:center;transform-origin:50% 50%;transform:scaleX(0.8);">$</div>
<svg style="left:506.30px;top:66.00px" width="3.4" height="2.0" viewBox="0 0 3.4 2.0"><path d="M0 0 L3.4 0 L1.7 2.0 Z" fill="#555"/></svg>
<div class="t" style="top:61.00px;height:14px;line-height:14px;font-size:10px;color:#333;left:418.20px;width:200px;text-align:center;transform-origin:50% 50%;transform:scaleX(0.8);">%</div>
<div class="t" style="top:55.00px;height:16px;line-height:16px;font-size:12px;color:#333;font-weight:bold;left:430.00px;width:200px;text-align:center;transform-origin:50% 50%;">,</div>
<svg style="left:494.80px;top:75.00px" width="9" height="8.6" viewBox="0 0 9 8.6"><path d="M3.8 1.8 H0.8" stroke="#3a72c4" stroke-width="0.8"/><path d="M1.8 0.6 L0.2 1.8 L1.8 3 Z" fill="#3a72c4"/><text x="3.4" y="4" font-size="5" font-weight="bold" fill="#444" font-family="Liberation Sans">.0</text><text x="1.4" y="8.2" font-size="5" font-weight="bold" fill="#444" font-family="Liberation Sans">.00</text></svg>
<svg style="left:507.20px;top:75.00px" width="9" height="8.6" viewBox="0 0 9 8.6"><path d="M0.4 6.4 H3.4" stroke="#3a72c4" stroke-width="0.8"/><path d="M2.4 5.2 L4 6.4 L2.4 7.6 Z" fill="#3a72c4"/><text x="2.4" y="4" font-size="5" font-weight="bold" fill="#444" font-family="Liberation Sans">.00</text><text x="4.6" y="8.2" font-size="5" font-weight="bold" fill="#444" font-family="Liberation Sans">.0</text></svg>
<svg style="left:543.30px;top:49.40px" width="10" height="10" viewBox="0 0 10 10"><rect x="0.4" y="0.4" width="8.2" height="8.2" fill="#fff" stroke="#9a9a9a" stroke-width="0.7"/><path d="M0.4 3 H8.6 M0.4 5.8 H8.6 M3.2 0.4 V8.6 M6 0.4 V8.6" stroke="#bdbdbd" stroke-width="0.6"/><rect x="0.8" y="0.8" width="2.4" height="2.2" fill="#e8492f"/><rect x="0.8" y="3.2" width="2.4" height="2.4" fill="#3a72c4"/><rect x="4.4" y="4.2" width="4.8" height="4.8" fill="#fff" stroke="#777" stroke-width="0.6"/><path d="M5.4 6.6 L6.8 5.2 L8.2 6.6 M5.4 8.2 L6.8 6.8 L8.2 8.2" stroke="#555" stroke-width="0.5" fill="none"/></svg>
<svg style="left:543.30px;top:62.30px" width="10" height="10" viewBox="0 0 10 10"><rect x="0.4" y="0.4" width="8.2" height="8.2" fill="#fff" stroke="#9a9a9a" stroke-width="0.7"/><path d="M0.4 3 H8.6 M0.4 5.8 H8.6 M3.2 0.4 V8.6 M6 0.4 V8.6" stroke="#bdbdbd" stroke-width="0.6"/><rect x="0.8" y="0.8" width="7.4" height="2" fill="#b9cfea"/><path d="M9.7 0.9 L7 5" stroke="#3b3b3b" stroke-width="1.7" stroke-linecap="round"/><path d="M7.9 5.7 L5.6 4.2 L3.0 9.8 Z" fill="#2f6fc6"/></svg>
<svg style="left:543.30px;top:75.20px" width="10" height="10" viewBox="0 0 10 10"><rect x="0.4" y="0.4" width="8.2" height="8.2" fill="#fff" stroke="#9a9a9a" stroke-width="0.7"/><path d="M0.4 3 H8.6 M0.4 5.8 H8.6 M3.2 0.4 V8.6 M6 0.4 V8.6" stroke="#bdbdbd" stroke-width="0.6"/><rect x="3.4" y="3.2" width="2.6" height="2.6" fill="#b9cfea"/><path d="M9.7 0.9 L7 5" stroke="#3b3b3b" stroke-width="1.7" stroke-linecap="round"/><path d="M7.9 5.7 L5.6 4.2 L3.0 9.8 Z" fill="#2f6fc6"/></svg>
<div class="t" style="top:49.00px;height:12px;line-height:12px;font-size:8px;color:#2b2b2b;left:554.00px;transform-origin:0 50%;transform:scaleX(0.864);-webkit-text-stroke:0.2px #2b2b2b;">Conditional Formatting</div>
<svg style="left:624.95px;top:53.55px" width="2.8899999999999997" height="1.7" viewBox="0 0 2.8899999999999997 1.7"><path d="M0 0 L2.8899999999999997 0 L1.4449999999999998 1.7 Z" fill="#555"/></svg>
<div class="t" style="top:62.00px;height:12px;line-height:12px;font-size:8px;color:#2b2b2b;left:554.00px;transform-origin:0 50%;transform:scaleX(0.809);-webkit-text-stroke:0.2px #2b2b2b;">Format as Table</div>
<svg style="left:601.95px;top:66.45px" width="2.8899999999999997" height="1.7" viewBox="0 0 2.8899999999999997 1.7"><path d="M0 0 L2.8899999999999997 0 L1.4449999999999998 1.7 Z" fill="#555"/></svg>
<div class="t" style="top:75.00px;height:12px;line-height:12px;font-size:8px;color:#2b2b2b;left:554.00px;transform-origin:0 50%;transform:scaleX(0.778);-webkit-text-stroke:0.2px #2b2b2b;">Cell Styles</div>
<svg style="left:585.15px;top:79.25px" width="2.8899999999999997" height="1.7" viewBox="0 0 2.8899999999999997 1.7"><path d="M0 0 L2.8899999999999997 0 L1.4449999999999998 1.7 Z" fill="#555"/></svg>
<svg style="left:638.20px;top:49.60px" width="9.4" height="9" viewBox="0 0 9.4 9"><rect x="0.4" y="0.4" width="3" height="2.2" fill="#fff" stroke="#8a8a8a" stroke-width="0.6"/><rect x="0.4" y="6.2" width="3" height="2.2" fill="#fff" stroke="#8a8a8a" stroke-width="0.6"/><rect x="3.4" y="3" width="5.4" height="2.8" fill="#dbe7f6" stroke="#3a72c4" stroke-width="0.7"/><path d="M3 4.4 H0.6" stroke="#3a72c4" stroke-width="0.8"/><path d="M1.6 3.2 L0 4.4 L1.6 5.6 Z" fill="#3a72c4"/><rect x="4" y="0.4" width="4.6" height="2" fill="#fff" stroke="#8a8a8a" stroke-width="0.6"/><rect x="4" y="6.4" width="4.6" height="2" fill="#fff" stroke="#8a8a8a" stroke-width="0.6"/></svg>
<svg style="left:638.20px;top:62.40px" width="9.4" height="9" viewBox="0 0 9.4 9"><rect x="0.4" y="0.4" width="3" height="2.2" fill="#fff" stroke="#8a8a8a" stroke-width="0.6"/><rect x="0.4" y="6.2" width="3" height="2.2" fill="#fff" stroke="#8a8a8a" stroke-width="0.6"/><rect x="0.4" y="3.2" width="3.6" height="2.4" fill="#fff" stroke="#8a8a8a" stroke-width="0.6"/><rect x="4" y="0.4" width="3" height="2" fill="#fff" stroke="#8a8a8a" stroke-width="0.6"/><rect x="4" y="6.4" width="3" height="2" fill="#fff" stroke="#8a8a8a" stroke-width="0.6"/><path d="M5 2.4 L8.8 6.2 M8.8 2.4 L5 6.2" stroke="#e0402c" stroke-width="1"/></svg>
<svg style="left:638.20px;top:75.20px" width="9.4" height="9.4" viewBox="0 0 9.4 9.4"><rect x="0.8" y="1.4" width="7.8" height="7.4" rx="0.8" fill="#fff" stroke="#777" stroke-width="0.8"/><path d="M2.6 0.2 V2.2 M6.8 0.2 V2.2" stroke="#777" stroke-width="0.8"/><rect x="2.8" y="3.8" width="3.8" height="3" fill="#3a72c4"/></svg>
<div class="t" style="top:49.00px;height:12px;line-height:12px;font-size:8px;color:#2b2b2b;left:649.20px;transform-origin:0 50%;transform:scaleX(0.815);-webkit-text-stroke:0.2px #2b2b2b;">Insert</div>
<svg style="left:670.95px;top:53.55px" width="2.8899999999999997" height="1.7" viewBox="0 0 2.8899999999999997 1.7"><path d="M0 0 L2.8899999999999997 0 L1.4449999999999998 1.7 Z" fill="#555"/></svg>
<div class="t" style="top:62.00px;height:12px;line-height:12px;font-size:8px;color:#2b2b2b;left:649.20px;transform-origin:0 50%;transform:scaleX(0.787);-webkit-text-stroke:0.2px #2b2b2b;">Delete</div>
<svg style="left:673.15px;top:66.45px" width="2.8899999999999997" height="1.7" viewBox="0 0 2.8899999999999997 1.7"><path d="M0 0 L2.8899999999999997 0 L1.4449999999999998 1.7 Z" fill="#555"/></svg>
<div class="t" style="top:75.00px;height:12px;line-height:12px;font-size:8px;color:#2b2b2b;left:649.20px;transform-origin:0 50%;transform:scaleX(0.821);-webkit-text-stroke:0.2px #2b2b2b;">Format</div>
<svg style="left:671.95px;top:79.25px" width="2.8899999999999997" height="1.7" viewBox="0 0 2.8899999999999997 1.7"><path d="M0 0 L2.8899999999999997 0 L1.4449999999999998 1.7 Z" fill="#555"/></svg>
<svg style="left:685.60px;top:49.60px" width="8.4" height="9.2" viewBox="0 0 8.4 9.2"><path d="M7.6 2.2 V0.6 H0.8 L4.4 4.6 L0.8 8.6 H7.6 V7" stroke="#333" stroke-width="1.1" fill="none"/></svg>
<svg style="left:697.55px;top:53.55px" width="2.8899999999999997" height="1.7" viewBox="0 0 2.8899999999999997 1.7"><path d="M0 0 L2.8899999999999997 0 L1.4449999999999998 1.7 Z" fill="#555"/></svg>
<svg style="left:705.00px;top:49.20px" width="5" height="10" viewBox="0 0 5 10"><text x="0.4" y="4.4" font-size="5" font-weight="bold" fill="#3a72c4" font-family="Liberation Sans">A</text><text x="0.6" y="9.4" font-size="5" font-weight="bold" fill="#7a3ab0" font-family="Liberation Sans">Z</text></svg>
<svg style="left:710.20px;top:51.60px" width="5" height="5.4" viewBox="0 0 5 5.4"><path d="M0 0 H5 L3.1 2.4 V5.2 L1.9 4.4 V2.4 Z" fill="#444"/></svg>
<svg style="left:716.25px;top:53.55px" width="2.8899999999999997" height="1.7" viewBox="0 0 2.8899999999999997 1.7"><path d="M0 0 L2.8899999999999997 0 L1.4449999999999998 1.7 Z" fill="#555"/></svg>
<svg style="left:685.40px;top:62.30px" width="8.8" height="9.2" viewBox="0 0 8.8 9.2"><rect x="0.5" y="0.5" width="7.8" height="8.2" fill="#fff" stroke="#666" stroke-width="0.8"/><rect x="0.5" y="0.5" width="7.8" height="1.6" fill="#666"/><path d="M4.4 2.8 V6" stroke="#3a72c4" stroke-width="1.4"/><path d="M2 5.2 H6.8 L4.4 8 Z" fill="#3a72c4"/></svg>
<svg style="left:697.55px;top:66.45px" width="2.8899999999999997" height="1.7" viewBox="0 0 2.8899999999999997 1.7"><path d="M0 0 L2.8899999999999997 0 L1.4449999999999998 1.7 Z" fill="#555"/></svg>
<svg style="left:704.60px;top:62.60px" width="9" height="9" viewBox="0 0 9 9"><circle cx="5.6" cy="3.2" r="2.4" fill="none" stroke="#3a72c4" stroke-width="1.1"/><path d="M3.8 5 L0.8 8.2" stroke="#3a72c4" stroke-width="1.4"/></svg>
<svg style="left:716.25px;top:66.45px" width="2.8899999999999997" height="1.7" viewBox="0 0 2.8899999999999997 1.7"><path d="M0 0 L2.8899999999999997 0 L1.4449999999999998 1.7 Z" fill="#555"/></svg>
<svg style="left:685.20px;top:75.60px" width="9" height="8" viewBox="0 0 9 8"><path d="M5.4 0.6 L8.4 3 L4.4 7.2 H2.4 L0.8 5.6 Z" fill="#f4b4c0" stroke="#d8506a" stroke-width="0.7"/><path d="M2.4 7.4 H8" stroke="#d8506a" stroke-width="0.6"/></svg>
<svg style="left:696.55px;top:79.25px" width="2.8899999999999997" height="1.7" viewBox="0 0 2.8899999999999997 1.7"><path d="M0 0 L2.8899999999999997 0 L1.4449999999999998 1.7 Z" fill="#555"/></svg>
<svg style="left:741.20px;top:90.80px" width="6.4" height="4.2" viewBox="0 0 6.4 4.2"><path d="M0.6 3.6 L3.2 0.8 L5.8 3.6" stroke="#333" stroke-width="1.3" fill="none"/></svg>
<div class="r" style="left:233.30px;top:97.20px;width:518.70px;height:26.80px;background:#e6e6e6;"></div>
<div class="r" style="left:236.30px;top:103.80px;width:56.60px;height:14.10px;background:#fefefe;border:0.6px solid #dcdcdc;box-sizing:border-box;"></div>
<div class="r" style="left:310.00px;top:103.80px;width:60.90px;height:14.10px;background:#fefefe;border:0.6px solid #dcdcdc;box-sizing:border-box;"></div>
<div class="r" style="left:373.50px;top:103.80px;width:375.80px;height:14.10px;background:#fefefe;border:0.6px solid #dcdcdc;box-sizing:border-box;"></div>
<div class="t" style="top:106.00px;height:12px;line-height:12px;font-size:8.5px;color:#2b2b2b;left:240.20px;transform-origin:0 50%;transform:scaleX(0.808);-webkit-text-stroke:0.2px #2b2b2b;">A1</div>
<div class="t" style="top:106.00px;height:12px;line-height:12px;font-size:8.5px;color:#2b2b2b;left:379.90px;transform-origin:0 50%;transform:scaleX(0.95);-webkit-text-stroke:0.2px #2b2b2b;">street</div>
<svg style="left:285.33px;top:109.70px" width="3.74" height="2.2" viewBox="0 0 3.74 2.2"><path d="M0 0 L3.74 0 L1.87 2.2 Z" fill="#444"/></svg>
<div class="r" style="left:301.10px;top:108.20px;width:0.80px;height:0.80px;background:#a0a0a0;"></div>
<div class="r" style="left:301.10px;top:110.00px;width:0.80px;height:0.80px;background:#a0a0a0;"></div>
<div class="r" style="left:301.10px;top:111.80px;width:0.80px;height:0.80px;background:#a0a0a0;"></div>
<div class="r" style="left:301.10px;top:113.60px;width:0.80px;height:0.80px;background:#a0a0a0;"></div>
<svg style="left:317.80px;top:108.20px" width="6" height="6" viewBox="0 0 6 6"><path d="M0.4 0.4 L5.6 5.6 M5.6 0.4 L0.4 5.6" stroke="#b4b4b4" stroke-width="0.8"/></svg>
<svg style="left:337.60px;top:108.20px" width="7" height="6" viewBox="0 0 7 6"><path d="M0.4 3.4 L2.4 5.6 L6.6 0.4" stroke="#b4b4b4" stroke-width="0.8" fill="none"/></svg>
<div class="t" style="top:106.00px;height:13px;line-height:13px;font-size:9px;color:#333;font-style:italic;left:358.40px;transform-origin:0 50%;font-family:'Liberation Serif',serif;">f</div>
<div class="t" style="top:109.00px;height:10px;line-height:10px;font-size:6px;color:#333;font-style:italic;left:361.00px;transform-origin:0 50%;font-family:'Liberation Serif',serif;">x</div>
<svg style="left:741.20px;top:108.90px" width="6.4" height="4.2" viewBox="0 0 6.4 4.2"><path d="M0.6 0.6 L3.2 3.4 L5.8 0.6" stroke="#333" stroke-width="1.3" fill="none"/></svg>
<div class="r" style="left:233.30px;top:124.00px;width:507.30px;height:11.30px;background:#e8e8e8;"></div>
<div class="r" style="left:247.20px;top:135.30px;width:493.40px;height:258.60px;background:#ffffff;"></div>
<div class="r" style="left:233.30px;top:135.30px;width:13.90px;height:258.60px;background:#ececec;"></div>
<div class="r" style="left:247.20px;top:124.00px;width:102.60px;height:11.30px;background:#d2d2d2;"></div>
<div class="r" style="left:233.30px;top:135.30px;width:13.90px;height:11.20px;background:#dadada;"></div>
<div class="r" style="left:247.20px;top:146.00px;width:493.40px;height:0.80px;background:#e9e9e9;"></div>
<div class="r" style="left:233.30px;top:146.00px;width:13.90px;height:0.80px;background:#d6d6d6;"></div>
<div class="r" style="left:247.20px;top:157.20px;width:493.40px;height:0.80px;background:#e9e9e9;"></div>
<div class="r" style="left:233.30px;top:157.20px;width:13.90px;height:0.80px;background:#d6d6d6;"></div>
<div class="r" style="left:247.20px;top:168.40px;width:493.40px;height:0.80px;background:#e9e9e9;"></div>
<div class="r" style="left:233.30px;top:168.40px;width:13.90px;height:0.80px;background:#d6d6d6;"></div>
<div class="r" style="left:247.20px;top:179.60px;width:493.40px;height:0.80px;background:#e9e9e9;"></div>
<div class="r" style="left:233.30px;top:179.60px;width:13.90px;height:0.80px;background:#d6d6d6;"></div>
<div class="r" style="left:247.20px;top:190.80px;width:493.40px;height:0.80px;background:#e9e9e9;"></div>
<div class="r" style="left:233.30px;top:190.80px;width:13.90px;height:0.80px;background:#d6d6d6;"></div>
<div class="r" style="left:247.20px;top:202.00px;width:493.40px;height:0.80px;background:#e9e9e9;"></div>
<div class="r" style="left:233.30px;top:202.00px;width:13.90px;height:0.80px;background:#d6d6d6;"></div>
<div class="r" style="left:247.20px;top:213.20px;width:493.40px;height:0.80px;background:#e9e9e9;"></div>
<div class="r" style="left:233.30px;top:213.20px;width:13.90px;height:0.80px;background:#d6d6d6;"></div>
<div class="r" style="left:247.20px;top:224.40px;width:493.40px;height:0.80px;background:#e9e9e9;"></div>
<div class="r" style="left:233.30px;top:224.40px;width:13.90px;height:0.80px;background:#d6d6d6;"></div>
<div class="r" style="left:247.20px;top:235.60px;width:493.40px;height:0.80px;background:#e9e9e9;"></div>
<div class="r" style="left:233.30px;top:235.60px;width:13.90px;height:0.80px;background:#d6d6d6;"></div>
<div class="r" style="left:247.20px;top:246.80px;width:493.40px;height:0.80px;background:#e9e9e9;"></div>
<div class="r" style="left:233.30px;top:246.80px;width:13.90px;height:0.80px;background:#d6d6d6;"></div>
<div class="r" style="left:247.20px;top:258.00px;width:493.40px;height:0.80px;background:#e9e9e9;"></div>
<div class="r" style="left:233.30px;top:258.00px;width:13.90px;height:0.80px;background:#d6d6d6;"></div>
<div class="r" style="left:247.20px;top:269.20px;width:493.40px;height:0.80px;background:#e9e9e9;"></div>
<div class="r" style="left:233.30px;top:269.20px;width:13.90px;height:0.80px;background:#d6d6d6;"></div>
<div class="r" style="left:247.20px;top:280.40px;width:493.40px;height:0.80px;background:#e9e9e9;"></div>
<div class="r" style="left:233.30px;top:280.40px;width:13.90px;height:0.80px;background:#d6d6d6;"></div>
<div class="r" style="left:247.20px;top:291.60px;width:493.40px;height:0.80px;background:#e9e9e9;"></div>
<div class="r" style="left:233.30px;top:291.60px;width:13.90px;height:0.80px;background:#d6d6d6;"></div>
<div class="r" style="left:247.20px;top:302.80px;width:493.40px;height:0.80px;background:#e9e9e9;"></div>
<div class="r" style="left:233.30px;top:302.80px;width:13.90px;height:0.80px;background:#d6d6d6;"></div>
<div class="r" style="left:247.20px;top:314.00px;width:493.40px;height:0.80px;background:#e9e9e9;"></div>
<div class="r" style="left:233.30px;top:314.00px;width:13.90px;height:0.80px;background:#d6d6d6;"></div>
<div class="r" style="left:247.20px;top:325.20px;width:493.40px;height:0.80px;background:#e9e9e9;"></div>
<div class="r" style="left:233.30px;top:325.20px;width:13.90px;height:0.80px;background:#d6d6d6;"></div>
<div class="r" style="left:247.20px;top:336.40px;width:493.40px;height:0.80px;background:#e9e9e9;"></div>
<div class="r" style="left:233.30px;top:336.40px;width:13.90px;height:0.80px;background:#d6d6d6;"></div>
<div class="r" style="left:247.20px;top:347.60px;width:493.40px;height:0.80px;background:#e9e9e9;"></div>
<div class="r" style="left:233.30px;top:347.60px;width:13.90px;height:0.80px;background:#d6d6d6;"></div>
<div class="r" style="left:247.20px;top:358.80px;width:493.40px;height:0.80px;background:#e9e9e9;"></div>
<div class="r" style="left:233.30px;top:358.80px;width:13.90px;height:0.80px;background:#d6d6d6;"></div>
<div class="r" style="left:247.20px;top:370.00px;width:493.40px;height:0.80px;background:#e9e9e9;"></div>
<div class="r" style="left:233.30px;top:370.00px;width:13.90px;height:0.80px;background:#d6d6d6;"></div>
<div class="r" style="left:247.20px;top:381.20px;width:493.40px;height:0.80px;background:#e9e9e9;"></div>
<div class="r" style="left:233.30px;top:381.20px;width:13.90px;height:0.80px;background:#d6d6d6;"></div>
<div class="r" style="left:247.20px;top:392.40px;width:493.40px;height:0.80px;background:#e9e9e9;"></div>
<div class="r" style="left:233.30px;top:392.40px;width:13.90px;height:0.80px;background:#d6d6d6;"></div>
<div class="r" style="left:349.30px;top:135.30px;width:0.80px;height:258.60px;background:#e9e9e9;"></div>
<div class="r" style="left:349.30px;top:125.00px;width:0.80px;height:10.30px;background:#c6c6c6;"></div>
<div class="t" style="top:124.00px;height:12px;line-height:12px;font-size:8px;color:#217346;left:198.50px;width:200px;text-align:center;transform-origin:50% 50%;transform:scaleX(0.9);">A</div>
<div class="r" style="left:424.30px;top:135.30px;width:0.80px;height:258.60px;background:#e9e9e9;"></div>
<div class="r" style="left:424.30px;top:125.00px;width:0.80px;height:10.30px;background:#c6c6c6;"></div>
<div class="t" style="top:124.00px;height:12px;line-height:12px;font-size:8px;color:#333;left:287.30px;width:200px;text-align:center;transform-origin:50% 50%;transform:scaleX(0.9);">B</div>
<div class="r" style="left:447.10px;top:135.30px;width:0.80px;height:258.60px;background:#e9e9e9;"></div>
<div class="r" style="left:447.10px;top:125.00px;width:0.80px;height:10.30px;background:#c6c6c6;"></div>
<div class="t" style="top:124.00px;height:12px;line-height:12px;font-size:8px;color:#333;left:336.20px;width:200px;text-align:center;transform-origin:50% 50%;transform:scaleX(0.9);">C</div>
<div class="r" style="left:468.20px;top:135.30px;width:0.80px;height:258.60px;background:#e9e9e9;"></div>
<div class="r" style="left:468.20px;top:125.00px;width:0.80px;height:10.30px;background:#c6c6c6;"></div>
<div class="t" style="top:124.00px;height:12px;line-height:12px;font-size:8px;color:#333;left:358.15px;width:200px;text-align:center;transform-origin:50% 50%;transform:scaleX(0.9);">D</div>
<div class="r" style="left:488.80px;top:135.30px;width:0.80px;height:258.60px;background:#e9e9e9;"></div>
<div class="r" style="left:488.80px;top:125.00px;width:0.80px;height:10.30px;background:#c6c6c6;"></div>
<div class="t" style="top:124.00px;height:12px;line-height:12px;font-size:8px;color:#333;left:379.00px;width:200px;text-align:center;transform-origin:50% 50%;transform:scaleX(0.9);">E</div>
<div class="r" style="left:511.60px;top:135.30px;width:0.80px;height:258.60px;background:#e9e9e9;"></div>
<div class="r" style="left:511.60px;top:125.00px;width:0.80px;height:10.30px;background:#c6c6c6;"></div>
<div class="t" style="top:124.00px;height:12px;line-height:12px;font-size:8px;color:#333;left:400.70px;width:200px;text-align:center;transform-origin:50% 50%;transform:scaleX(0.9);">F</div>
<div class="r" style="left:537.50px;top:135.30px;width:0.80px;height:258.60px;background:#e9e9e9;"></div>
<div class="r" style="left:537.50px;top:125.00px;width:0.80px;height:10.30px;background:#c6c6c6;"></div>
<div class="t" style="top:124.00px;height:12px;line-height:12px;font-size:8px;color:#333;left:425.05px;width:200px;text-align:center;transform-origin:50% 50%;transform:scaleX(0.9);">G</div>
<div class="r" style="left:585.70px;top:135.30px;width:0.80px;height:258.60px;background:#e9e9e9;"></div>
<div class="r" style="left:585.70px;top:125.00px;width:0.80px;height:10.30px;background:#c6c6c6;"></div>
<div class="t" style="top:124.00px;height:12px;line-height:12px;font-size:8px;color:#333;left:462.10px;width:200px;text-align:center;transform-origin:50% 50%;transform:scaleX(0.9);">H</div>
<div class="r" style="left:613.30px;top:135.30px;width:0.80px;height:258.60px;background:#e9e9e9;"></div>
<div class="r" style="left:613.30px;top:125.00px;width:0.80px;height:10.30px;background:#c6c6c6;"></div>
<div class="t" style="top:124.00px;height:12px;line-height:12px;font-size:8px;color:#333;left:500.00px;width:200px;text-align:center;transform-origin:50% 50%;transform:scaleX(0.9);">I</div>
<div class="r" style="left:652.20px;top:135.30px;width:0.80px;height:258.60px;background:#e9e9e9;"></div>
<div class="r" style="left:652.20px;top:125.00px;width:0.80px;height:10.30px;background:#c6c6c6;"></div>
<div class="t" style="top:124.00px;height:12px;line-height:12px;font-size:8px;color:#333;left:533.25px;width:200px;text-align:center;transform-origin:50% 50%;transform:scaleX(0.9);">J</div>
<div class="r" style="left:698.10px;top:135.30px;width:0.80px;height:258.60px;background:#e9e9e9;"></div>
<div class="r" style="left:698.10px;top:125.00px;width:0.80px;height:10.30px;background:#c6c6c6;"></div>
<div class="t" style="top:124.00px;height:12px;line-height:12px;font-size:8px;color:#333;left:575.65px;width:200px;text-align:center;transform-origin:50% 50%;transform:scaleX(0.9);">K</div>
<div class="r" style="left:735.10px;top:135.30px;width:0.80px;height:258.60px;background:#e9e9e9;"></div>
<div class="r" style="left:735.10px;top:125.00px;width:0.80px;height:10.30px;background:#c6c6c6;"></div>
<div class="t" style="top:124.00px;height:12px;line-height:12px;font-size:8px;color:#333;left:617.10px;width:200px;text-align:center;transform-origin:50% 50%;transform:scaleX(0.9);">L</div>
<div class="r" style="left:246.80px;top:125.00px;width:0.20px;height:268.90px;background:#c6c6c6;"></div>
<div class="r" style="left:233.30px;top:134.90px;width:507.30px;height:0.80px;background:#c6c6c6;"></div>
<div class="t" style="top:135.00px;height:12px;line-height:12px;font-size:8.5px;color:#217346;left:140.50px;width:200px;text-align:center;transform-origin:50% 50%;transform:scaleX(0.9);-webkit-text-stroke:0.2px;">1</div>
<div class="t" style="top:135.00px;height:12px;line-height:12px;font-size:8.5px;color:#23262b;left:249.20px;transform-origin:0 50%;transform:scaleX(0.95);-webkit-text-stroke:0.32px #23262b;">street</div>
<div class="t" style="top:135.00px;height:12px;line-height:12px;font-size:8.5px;color:#23262b;left:351.20px;transform-origin:0 50%;transform:scaleX(0.95);-webkit-text-stroke:0.32px #23262b;">city</div>
<div class="t" style="top:135.00px;height:12px;line-height:12px;font-size:8.5px;color:#23262b;left:426.20px;transform-origin:0 50%;transform:scaleX(0.95);-webkit-text-stroke:0.32px #23262b;">zip</div>
<div class="t" style="top:135.00px;height:12px;line-height:12px;font-size:8.5px;color:#23262b;left:449.00px;transform-origin:0 50%;transform:scaleX(0.95);-webkit-text-stroke:0.32px #23262b;">state</div>
<div class="t" style="top:135.00px;height:12px;line-height:12px;font-size:8.5px;color:#23262b;left:470.10px;transform-origin:0 50%;transform:scaleX(0.95);-webkit-text-stroke:0.32px #23262b;">beds</div>
<div class="t" style="top:135.00px;height:12px;line-height:12px;font-size:8.5px;color:#23262b;left:490.70px;transform-origin:0 50%;transform:scaleX(0.95);-webkit-text-stroke:0.32px #23262b;">baths</div>
<div class="t" style="top:135.00px;height:12px;line-height:12px;font-size:8.5px;color:#23262b;left:513.50px;transform-origin:0 50%;transform:scaleX(0.95);-webkit-text-stroke:0.32px #23262b;">sq__ft</div>
<div class="t" style="top:135.00px;height:12px;line-height:12px;font-size:8.5px;color:#23262b;left:540.00px;transform-origin:0 50%;transform:scaleX(0.95);-webkit-text-stroke:0.32px #23262b;">type</div>
<div class="t" style="top:135.00px;height:12px;line-height:12px;font-size:8.5px;color:#23262b;left:587.60px;transform-origin:0 50%;transform:scaleX(0.95);-webkit-text-stroke:0.32px #23262b;">price</div>
<div class="t" style="top:135.00px;height:12px;line-height:12px;font-size:8.5px;color:#23262b;left:615.20px;transform-origin:0 50%;transform:scaleX(0.95);-webkit-text-stroke:0.32px #23262b;">latitude</div>
<div class="t" style="top:135.00px;height:12px;line-height:12px;font-size:8.5px;color:#23262b;left:654.10px;transform-origin:0 50%;transform:scaleX(0.95);-webkit-text-stroke:0.32px #23262b;">longitude</div>
<div class="t" style="top:146.00px;height:12px;line-height:12px;font-size:8.5px;color:#333;left:140.50px;width:200px;text-align:center;transform-origin:50% 50%;transform:scaleX(0.9);-webkit-text-stroke:0.2px;">2</div>
<div class="t" style="top:146.00px;height:12px;line-height:12px;font-size:8.5px;color:#23262b;left:249.20px;transform-origin:0 50%;transform:scaleX(0.789);-webkit-text-stroke:0.32px #23262b;">3526 HIGH ST</div>
<div class="t" style="top:146.00px;height:12px;line-height:12px;font-size:8.5px;color:#23262b;left:351.00px;transform-origin:0 50%;transform:scaleX(0.819);-webkit-text-stroke:0.32px #23262b;">SACRAMENTO</div>
<div class="t" style="top:146.00px;height:12px;line-height:12px;font-size:8.5px;color:#23262b;right:544.90px;transform-origin:100% 50%;transform:scaleX(0.845);-webkit-text-stroke:0.32px #23262b;">95838</div>
<div class="t" style="top:146.00px;height:12px;line-height:12px;font-size:8.5px;color:#23262b;left:449.00px;transform-origin:0 50%;transform:scaleX(0.8);-webkit-text-stroke:0.32px #23262b;">CA</div>
<div class="t" style="top:146.00px;height:12px;line-height:12px;font-size:8.5px;color:#23262b;right:503.20px;transform-origin:100% 50%;transform:scaleX(0.845);-webkit-text-stroke:0.32px #23262b;">2</div>
<div class="t" style="top:146.00px;height:12px;line-height:12px;font-size:8.5px;color:#23262b;right:480.40px;transform-origin:100% 50%;transform:scaleX(0.845);-webkit-text-stroke:0.32px #23262b;">1</div>
<div class="t" style="top:146.00px;height:12px;line-height:12px;font-size:8.5px;color:#23262b;right:454.50px;transform-origin:100% 50%;transform:scaleX(0.845);-webkit-text-stroke:0.32px #23262b;">836</div>
<div class="t" style="top:146.00px;height:12px;line-height:12px;font-size:8.5px;color:#23262b;left:540.00px;transform-origin:0 50%;transform:scaleX(0.93);-webkit-text-stroke:0.32px #23262b;">Residential</div>
<div class="t" style="top:146.00px;height:12px;line-height:12px;font-size:8.5px;color:#23262b;right:378.70px;transform-origin:100% 50%;transform:scaleX(0.845);-webkit-text-stroke:0.32px #23262b;">59222</div>
<div class="t" style="top:146.00px;height:12px;line-height:12px;font-size:8.5px;color:#23262b;right:339.80px;transform-origin:100% 50%;transform:scaleX(0.845);-webkit-text-stroke:0.32px #23262b;">38.631913</div>
<div class="t" style="top:146.00px;height:12px;line-height:12px;font-size:8.5px;color:#23262b;right:293.90px;transform-origin:100% 50%;transform:scaleX(0.845);-webkit-text-stroke:0.32px #23262b;">-121.434879</div>
<div class="t" style="top:157.00px;height:12px;line-height:12px;font-size:8.5px;color:#333;left:140.50px;width:200px;text-align:center;transform-origin:50% 50%;transform:scaleX(0.9);-webkit-text-stroke:0.2px;">3</div>
<div class="t" style="top:157.00px;height:12px;line-height:12px;font-size:8.5px;color:#23262b;left:249.20px;transform-origin:0 50%;transform:scaleX(0.829);-webkit-text-stroke:0.32px #23262b;">51 OMAHA CT</div>
<div class="t" style="top:157.00px;height:12px;line-height:12px;font-size:8.5px;color:#23262b;left:351.00px;transform-origin:0 50%;transform:scaleX(0.819);-webkit-text-stroke:0.32px #23262b;">SACRAMENTO</div>
<div class="t" style="top:157.00px;height:12px;line-height:12px;font-size:8.5px;color:#23262b;right:544.90px;transform-origin:100% 50%;transform:scaleX(0.845);-webkit-text-stroke:0.32px #23262b;">95823</div>
<div class="t" style="top:157.00px;height:12px;line-height:12px;font-size:8.5px;color:#23262b;left:449.00px;transform-origin:0 50%;transform:scaleX(0.8);-webkit-text-stroke:0.32px #23262b;">CA</div>
<div class="t" style="top:157.00px;height:12px;line-height:12px;font-size:8.5px;color:#23262b;right:503.20px;transform-origin:100% 50%;transform:scaleX(0.845);-webkit-text-stroke:0.32px #23262b;">3</div>
<div class="t" style="top:157.00px;height:12px;line-height:12px;font-size:8.5px;color:#23262b;right:480.40px;transform-origin:100% 50%;transform:scaleX(0.845);-webkit-text-stroke:0.32px #23262b;">1</div>
<div class="t" style="top:157.00px;height:12px;line-height:12px;font-size:8.5px;color:#23262b;right:454.50px;transform-origin:100% 50%;transform:scaleX(0.845);-webkit-text-stroke:0.32px #23262b;">1167</div>
<div class="t" style="top:157.00px;height:12px;line-height:12px;font-size:8.5px;color:#23262b;left:540.00px;transform-origin:0 50%;transform:scaleX(0.93);-webkit-text-stroke:0.32px #23262b;">Residential</div>
<div class="t" style="top:157.00px;height:12px;line-height:12px;font-size:8.5px;color:#23262b;right:378.70px;transform-origin:100% 50%;transform:scaleX(0.845);-webkit-text-stroke:0.32px #23262b;">68212</div>
<div class="t" style="top:157.00px;height:12px;line-height:12px;font-size:8.5px;color:#23262b;right:339.80px;transform-origin:100% 50%;transform:scaleX(0.845);-webkit-text-stroke:0.32px #23262b;">38.478902</div>
<div class="t" style="top:157.00px;height:12px;line-height:12px;font-size:8.5px;color:#23262b;right:293.90px;transform-origin:100% 50%;transform:scaleX(0.845);-webkit-text-stroke:0.32px #23262b;">-121.431028</div>
<div class="t" style="top:169.00px;height:12px;line-height:12px;font-size:8.5px;color:#333;left:140.50px;width:200px;text-align:center;transform-origin:50% 50%;transform:scaleX(0.9);-webkit-text-stroke:0.2px;">4</div>
<div class="t" style="top:169.00px;height:12px;line-height:12px;font-size:8.5px;color:#23262b;left:249.20px;transform-origin:0 50%;transform:scaleX(0.787);-webkit-text-stroke:0.32px #23262b;">2796 BRANCH ST</div>
<div class="t" style="top:169.00px;height:12px;line-height:12px;font-size:8.5px;color:#23262b;left:351.00px;transform-origin:0 50%;transform:scaleX(0.819);-webkit-text-stroke:0.32px #23262b;">SACRAMENTO</div>
<div class="t" style="top:169.00px;height:12px;line-height:12px;font-size:8.5px;color:#23262b;right:544.90px;transform-origin:100% 50%;transform:scaleX(0.845);-webkit-text-stroke:0.32px #23262b;">95815</div>
<div class="t" style="top:169.00px;height:12px;line-height:12px;font-size:8.5px;color:#23262b;left:449.00px;transform-origin:0 50%;transform:scaleX(0.8);-webkit-text-stroke:0.32px #23262b;">CA</div>
<div class="t" style="top:169.00px;height:12px;line-height:12px;font-size:8.5px;color:#23262b;right:503.20px;transform-origin:100% 50%;transform:scaleX(0.845);-webkit-text-stroke:0.32px #23262b;">2</div>
<div class="t" style="top:169.00px;height:12px;line-height:12px;font-size:8.5px;color:#23262b;right:480.40px;transform-origin:100% 50%;transform:scaleX(0.845);-webkit-text-stroke:0.32px #23262b;">1</div>
<div class="t" style="top:169.00px;height:12px;line-height:12px;font-size:8.5px;color:#23262b;right:454.50px;transform-origin:100% 50%;transform:scaleX(0.845);-webkit-text-stroke:0.32px #23262b;">796</div>
<div class="t" style="top:169.00px;height:12px;line-height:12px;font-size:8.5px;color:#23262b;left:540.00px;transform-origin:0 50%;transform:scaleX(0.93);-webkit-text-stroke:0.32px #23262b;">Residential</div>
<div class="t" style="top:169.00px;height:12px;line-height:12px;font-size:8.5px;color:#23262b;right:378.70px;transform-origin:100% 50%;transform:scaleX(0.845);-webkit-text-stroke:0.32px #23262b;">68880</div>
<div class="t" style="top:169.00px;height:12px;line-height:12px;font-size:8.5px;color:#23262b;right:339.80px;transform-origin:100% 50%;transform:scaleX(0.845);-webkit-text-stroke:0.32px #23262b;">38.618305</div>
<div class="t" style="top:169.00px;height:12px;line-height:12px;font-size:8.5px;color:#23262b;right:293.90px;transform-origin:100% 50%;transform:scaleX(0.845);-webkit-text-stroke:0.32px #23262b;">-121.443839</div>
<div class="t" style="top:180.00px;height:12px;line-height:12px;font-size:8.5px;color:#333;left:140.50px;width:200px;text-align:center;transform-origin:50% 50%;transform:scaleX(0.9);-webkit-text-stroke:0.2px;">5</div>
<div class="t" style="top:180.00px;height:12px;line-height:12px;font-size:8.5px;color:#23262b;left:249.20px;transform-origin:0 50%;transform:scaleX(0.799);-webkit-text-stroke:0.32px #23262b;">2805 JANETTE WAY</div>
<div class="t" style="top:180.00px;height:12px;line-height:12px;font-size:8.5px;color:#23262b;left:351.00px;transform-origin:0 50%;transform:scaleX(0.819);-webkit-text-stroke:0.32px #23262b;">SACRAMENTO</div>
<div class="t" style="top:180.00px;height:12px;line-height:12px;font-size:8.5px;color:#23262b;right:544.90px;transform-origin:100% 50%;transform:scaleX(0.845);-webkit-text-stroke:0.32px #23262b;">95815</div>
<div class="t" style="top:180.00px;height:12px;line-height:12px;font-size:8.5px;color:#23262b;left:449.00px;transform-origin:0 50%;transform:scaleX(0.8);-webkit-text-stroke:0.32px #23262b;">CA</div>
<div class="t" style="top:180.00px;height:12px;line-height:12px;font-size:8.5px;color:#23262b;right:503.20px;transform-origin:100% 50%;transform:scaleX(0.845);-webkit-text-stroke:0.32px #23262b;">2</div>
<div class="t" style="top:180.00px;height:12px;line-height:12px;font-size:8.5px;color:#23262b;right:480.40px;transform-origin:100% 50%;transform:scaleX(0.845);-webkit-text-stroke:0.32px #23262b;">1</div>
<div class="t" style="top:180.00px;height:12px;line-height:12px;font-size:8.5px;color:#23262b;right:454.50px;transform-origin:100% 50%;transform:scaleX(0.845);-webkit-text-stroke:0.32px #23262b;">852</div>
<div class="t" style="top:180.00px;height:12px;line-height:12px;font-size:8.5px;color:#23262b;left:540.00px;transform-origin:0 50%;transform:scaleX(0.93);-webkit-text-stroke:0.32px #23262b;">Residential</div>
<div class="t" style="top:180.00px;height:12px;line-height:12px;font-size:8.5px;color:#23262b;right:378.70px;transform-origin:100% 50%;transform:scaleX(0.845);-webkit-text-stroke:0.32px #23262b;">69307</div>
<div class="t" style="top:180.00px;height:12px;line-height:12px;font-size:8.5px;color:#23262b;right:339.80px;transform-origin:100% 50%;transform:scaleX(0.845);-webkit-text-stroke:0.32px #23262b;">38.616835</div>
<div class="t" style="top:180.00px;height:12px;line-height:12px;font-size:8.5px;color:#23262b;right:293.90px;transform-origin:100% 50%;transform:scaleX(0.845);-webkit-text-stroke:0.32px #23262b;">-121.439146</div>
<div class="t" style="top:191.00px;height:12px;line-height:12px;font-size:8.5px;color:#333;left:140.50px;width:200px;text-align:center;transform-origin:50% 50%;transform:scaleX(0.9);-webkit-text-stroke:0.2px;">6</div>
<div class="t" style="top:191.00px;height:12px;line-height:12px;font-size:8.5px;color:#23262b;left:249.20px;transform-origin:0 50%;transform:scaleX(0.831);-webkit-text-stroke:0.32px #23262b;">6001 MCMAHON DR</div>
<div class="t" style="top:191.00px;height:12px;line-height:12px;font-size:8.5px;color:#23262b;left:351.00px;transform-origin:0 50%;transform:scaleX(0.819);-webkit-text-stroke:0.32px #23262b;">SACRAMENTO</div>
<div class="t" style="top:191.00px;height:12px;line-height:12px;font-size:8.5px;color:#23262b;right:544.90px;transform-origin:100% 50%;transform:scaleX(0.845);-webkit-text-stroke:0.32px #23262b;">95824</div>
<div class="t" style="top:191.00px;height:12px;line-height:12px;font-size:8.5px;color:#23262b;left:449.00px;transform-origin:0 50%;transform:scaleX(0.8);-webkit-text-stroke:0.32px #23262b;">CA</div>
<div class="t" style="top:191.00px;height:12px;line-height:12px;font-size:8.5px;color:#23262b;right:503.20px;transform-origin:100% 50%;transform:scaleX(0.845);-webkit-text-stroke:0.32px #23262b;">2</div>
<div class="t" style="top:191.00px;height:12px;line-height:12px;font-size:8.5px;color:#23262b;right:480.40px;transform-origin:100% 50%;transform:scaleX(0.845);-webkit-text-stroke:0.32px #23262b;">1</div>
<div class="t" style="top:191.00px;height:12px;line-height:12px;font-size:8.5px;color:#23262b;right:454.50px;transform-origin:100% 50%;transform:scaleX(0.845);-webkit-text-stroke:0.32px #23262b;">797</div>
<div class="t" style="top:191.00px;height:12px;line-height:12px;font-size:8.5px;color:#23262b;left:540.00px;transform-origin:0 50%;transform:scaleX(0.93);-webkit-text-stroke:0.32px #23262b;">Residential</div>
<div class="t" style="top:191.00px;height:12px;line-height:12px;font-size:8.5px;color:#23262b;right:378.70px;transform-origin:100% 50%;transform:scaleX(0.845);-webkit-text-stroke:0.32px #23262b;">81900</div>
<div class="t" style="top:191.00px;height:12px;line-height:12px;font-size:8.5px;color:#23262b;right:339.80px;transform-origin:100% 50%;transform:scaleX(0.845);-webkit-text-stroke:0.32px #23262b;">38.51947</div>
<div class="t" style="top:191.00px;height:12px;line-height:12px;font-size:8.5px;color:#23262b;right:293.90px;transform-origin:100% 50%;transform:scaleX(0.845);-webkit-text-stroke:0.32px #23262b;">-121.435768</div>
<div class="t" style="top:202.00px;height:12px;line-height:12px;font-size:8.5px;color:#333;left:140.50px;width:200px;text-align:center;transform-origin:50% 50%;transform:scaleX(0.9);-webkit-text-stroke:0.2px;">7</div>
<div class="t" style="top:202.00px;height:12px;line-height:12px;font-size:8.5px;color:#23262b;left:249.20px;transform-origin:0 50%;transform:scaleX(0.784);-webkit-text-stroke:0.32px #23262b;">5828 PEPPERMILL CT</div>
<div class="t" style="top:202.00px;height:12px;line-height:12px;font-size:8.5px;color:#23262b;left:351.00px;transform-origin:0 50%;transform:scaleX(0.819);-webkit-text-stroke:0.32px #23262b;">SACRAMENTO</div>
<div class="t" style="top:202.00px;height:12px;line-height:12px;font-size:8.5px;color:#23262b;right:544.90px;transform-origin:100% 50%;transform:scaleX(0.845);-webkit-text-stroke:0.32px #23262b;">95841</div>
<div class="t" style="top:202.00px;height:12px;line-height:12px;font-size:8.5px;color:#23262b;left:449.00px;transform-origin:0 50%;transform:scaleX(0.8);-webkit-text-stroke:0.32px #23262b;">CA</div>
<div class="t" style="top:202.00px;height:12px;line-height:12px;font-size:8.5px;color:#23262b;right:503.20px;transform-origin:100% 50%;transform:scaleX(0.845);-webkit-text-stroke:0.32px #23262b;">3</div>
<div class="t" style="top:202.00px;height:12px;line-height:12px;font-size:8.5px;color:#23262b;right:480.40px;transform-origin:100% 50%;transform:scaleX(0.845);-webkit-text-stroke:0.32px #23262b;">1</div>
<div class="t" style="top:202.00px;height:12px;line-height:12px;font-size:8.5px;color:#23262b;right:454.50px;transform-origin:100% 50%;transform:scaleX(0.845);-webkit-text-stroke:0.32px #23262b;">1122</div>
<div class="t" style="top:202.00px;height:12px;line-height:12px;font-size:8.5px;color:#23262b;left:540.00px;transform-origin:0 50%;transform:scaleX(0.93);-webkit-text-stroke:0.32px #23262b;">Condo</div>
<div class="t" style="top:202.00px;height:12px;line-height:12px;font-size:8.5px;color:#23262b;right:378.70px;transform-origin:100% 50%;transform:scaleX(0.845);-webkit-text-stroke:0.32px #23262b;">89921</div>
<div class="t" style="top:202.00px;height:12px;line-height:12px;font-size:8.5px;color:#23262b;right:339.80px;transform-origin:100% 50%;transform:scaleX(0.845);-webkit-text-stroke:0.32px #23262b;">38.662595</div>
<div class="t" style="top:202.00px;height:12px;line-height:12px;font-size:8.5px;color:#23262b;right:293.90px;transform-origin:100% 50%;transform:scaleX(0.845);-webkit-text-stroke:0.32px #23262b;">-121.327813</div>
<div class="t" style="top:213.00px;height:12px;line-height:12px;font-size:8.5px;color:#333;left:140.50px;width:200px;text-align:center;transform-origin:50% 50%;transform:scaleX(0.9);-webkit-text-stroke:0.2px;">8</div>
<div class="t" style="top:213.00px;height:12px;line-height:12px;font-size:8.5px;color:#23262b;left:249.20px;transform-origin:0 50%;transform:scaleX(0.825);-webkit-text-stroke:0.32px #23262b;">6048 OGDEN NASH WAY</div>
<div class="t" style="top:213.00px;height:12px;line-height:12px;font-size:8.5px;color:#23262b;left:351.00px;transform-origin:0 50%;transform:scaleX(0.819);-webkit-text-stroke:0.32px #23262b;">SACRAMENTO</div>
<div class="t" style="top:213.00px;height:12px;line-height:12px;font-size:8.5px;color:#23262b;right:544.90px;transform-origin:100% 50%;transform:scaleX(0.845);-webkit-text-stroke:0.32px #23262b;">95842</div>
<div class="t" style="top:213.00px;height:12px;line-height:12px;font-size:8.5px;color:#23262b;left:449.00px;transform-origin:0 50%;transform:scaleX(0.8);-webkit-text-stroke:0.32px #23262b;">CA</div>
<div class="t" style="top:213.00px;height:12px;line-height:12px;font-size:8.5px;color:#23262b;right:503.20px;transform-origin:100% 50%;transform:scaleX(0.845);-webkit-text-stroke:0.32px #23262b;">3</div>
<div class="t" style="top:213.00px;height:12px;line-height:12px;font-size:8.5px;color:#23262b;right:480.40px;transform-origin:100% 50%;transform:scaleX(0.845);-webkit-text-stroke:0.32px #23262b;">2</div>
<div class="t" style="top:213.00px;height:12px;line-height:12px;font-size:8.5px;color:#23262b;right:454.50px;transform-origin:100% 50%;transform:scaleX(0.845);-webkit-text-stroke:0.32px #23262b;">1104</div>
<div class="t" style="top:213.00px;height:12px;line-height:12px;font-size:8.5px;color:#23262b;left:540.00px;transform-origin:0 50%;transform:scaleX(0.93);-webkit-text-stroke:0.32px #23262b;">Residential</div>
<div class="t" style="top:213.00px;height:12px;line-height:12px;font-size:8.5px;color:#23262b;right:378.70px;transform-origin:100% 50%;transform:scaleX(0.845);-webkit-text-stroke:0.32px #23262b;">90895</div>
<div class="t" style="top:213.00px;height:12px;line-height:12px;font-size:8.5px;color:#23262b;right:339.80px;transform-origin:100% 50%;transform:scaleX(0.845);-webkit-text-stroke:0.32px #23262b;">38.681659</div>
<div class="t" style="top:213.00px;height:12px;line-height:12px;font-size:8.5px;color:#23262b;right:293.90px;transform-origin:100% 50%;transform:scaleX(0.845);-webkit-text-stroke:0.32px #23262b;">-121.351705</div>
<div class="t" style="top:225.00px;height:12px;line-height:12px;font-size:8.5px;color:#333;left:140.50px;width:200px;text-align:center;transform-origin:50% 50%;transform:scaleX(0.9);-webkit-text-stroke:0.2px;">9</div>
<div class="t" style="top:225.00px;height:12px;line-height:12px;font-size:8.5px;color:#23262b;left:249.20px;transform-origin:0 50%;transform:scaleX(0.816);-webkit-text-stroke:0.32px #23262b;">2561 19TH AVE</div>
<div class="t" style="top:225.00px;height:12px;line-height:12px;font-size:8.5px;color:#23262b;left:351.00px;transform-origin:0 50%;transform:scaleX(0.819);-webkit-text-stroke:0.32px #23262b;">SACRAMENTO</div>
<div class="t" style="top:225.00px;height:12px;line-height:12px;font-size:8.5px;color:#23262b;right:544.90px;transform-origin:100% 50%;transform:scaleX(0.845);-webkit-text-stroke:0.32px #23262b;">95820</div>
<div class="t" style="top:225.00px;height:12px;line-height:12px;font-size:8.5px;color:#23262b;left:449.00px;transform-origin:0 50%;transform:scaleX(0.8);-webkit-text-stroke:0.32px #23262b;">CA</div>
<div class="t" style="top:225.00px;height:12px;line-height:12px;font-size:8.5px;color:#23262b;right:503.20px;transform-origin:100% 50%;transform:scaleX(0.845);-webkit-text-stroke:0.32px #23262b;">3</div>
<div class="t" style="top:225.00px;height:12px;line-height:12px;font-size:8.5px;color:#23262b;right:480.40px;transform-origin:100% 50%;transform:scaleX(0.845);-webkit-text-stroke:0.32px #23262b;">1</div>
<div class="t" style="top:225.00px;height:12px;line-height:12px;font-size:8.5px;color:#23262b;right:454.50px;transform-origin:100% 50%;transform:scaleX(0.845);-webkit-text-stroke:0.32px #23262b;">1177</div>
<div class="t" style="top:225.00px;height:12px;line-height:12px;font-size:8.5px;color:#23262b;left:540.00px;transform-origin:0 50%;transform:scaleX(0.93);-webkit-text-stroke:0.32px #23262b;">Residential</div>
<div class="t" style="top:225.00px;height:12px;line-height:12px;font-size:8.5px;color:#23262b;right:378.70px;transform-origin:100% 50%;transform:scaleX(0.845);-webkit-text-stroke:0.32px #23262b;">91002</div>
<div class="t" style="top:225.00px;height:12px;line-height:12px;font-size:8.5px;color:#23262b;right:339.80px;transform-origin:100% 50%;transform:scaleX(0.845);-webkit-text-stroke:0.32px #23262b;">38.535092</div>
<div class="t" style="top:225.00px;height:12px;line-height:12px;font-size:8.5px;color:#23262b;right:293.90px;transform-origin:100% 50%;transform:scaleX(0.845);-webkit-text-stroke:0.32px #23262b;">-121.481367</div>
<div class="t" style="top:236.00px;height:12px;line-height:12px;font-size:8.5px;color:#333;left:140.50px;width:200px;text-align:center;transform-origin:50% 50%;transform:scaleX(0.9);-webkit-text-stroke:0.2px;">10</div>
<div class="r" style="left:0;top:0;width:349.20px;height:409px;overflow:hidden;"><div class="t" style="top:236.00px;height:12px;line-height:12px;font-size:8.5px;color:#23262b;left:249.20px;transform-origin:0 50%;transform:scaleX(0.799);-webkit-text-stroke:0.32px #23262b;">11150 TRINITY RIVER DR</div><div class="t" style="top:236.00px;height:12px;line-height:12px;font-size:8.5px;color:#23262b;left:331.70px;transform-origin:0 50%;transform:scaleX(0.856);-webkit-text-stroke:0.32px #23262b;">Unit 1</div></div>
<div class="t" style="top:236.00px;height:12px;line-height:12px;font-size:8.5px;color:#23262b;left:351.00px;transform-origin:0 50%;transform:scaleX(0.822);-webkit-text-stroke:0.32px #23262b;">RANCHO CORDOVA</div>
<div class="t" style="top:236.00px;height:12px;line-height:12px;font-size:8.5px;color:#23262b;right:544.90px;transform-origin:100% 50%;transform:scaleX(0.845);-webkit-text-stroke:0.32px #23262b;">95670</div>
<div class="t" style="top:236.00px;height:12px;line-height:12px;font-size:8.5px;color:#23262b;left:449.00px;transform-origin:0 50%;transform:scaleX(0.8);-webkit-text-stroke:0.32px #23262b;">CA</div>
<div class="t" style="top:236.00px;height:12px;line-height:12px;font-size:8.5px;color:#23262b;right:503.20px;transform-origin:100% 50%;transform:scaleX(0.845);-webkit-text-stroke:0.32px #23262b;">2</div>
<div class="t" style="top:236.00px;height:12px;line-height:12px;font-size:8.5px;color:#23262b;right:480.40px;transform-origin:100% 50%;transform:scaleX(0.845);-webkit-text-stroke:0.32px #23262b;">2</div>
<div class="t" style="top:236.00px;height:12px;line-height:12px;font-size:8.5px;color:#23262b;right:454.50px;transform-origin:100% 50%;transform:scaleX(0.845);-webkit-text-stroke:0.32px #23262b;">941</div>
<div class="t" style="top:236.00px;height:12px;line-height:12px;font-size:8.5px;color:#23262b;left:540.00px;transform-origin:0 50%;transform:scaleX(0.93);-webkit-text-stroke:0.32px #23262b;">Condo</div>
<div class="t" style="top:236.00px;height:12px;line-height:12px;font-size:8.5px;color:#23262b;right:378.70px;transform-origin:100% 50%;transform:scaleX(0.845);-webkit-text-stroke:0.32px #23262b;">94905</div>
<div class="t" style="top:236.00px;height:12px;line-height:12px;font-size:8.5px;color:#23262b;right:339.80px;transform-origin:100% 50%;transform:scaleX(0.845);-webkit-text-stroke:0.32px #23262b;">38.621188</div>
<div class="t" style="top:236.00px;height:12px;line-height:12px;font-size:8.5px;color:#23262b;right:293.90px;transform-origin:100% 50%;transform:scaleX(0.845);-webkit-text-stroke:0.32px #23262b;">-121.270555</div>
<div class="t" style="top:247.00px;height:12px;line-height:12px;font-size:8.5px;color:#333;left:140.50px;width:200px;text-align:center;transform-origin:50% 50%;transform:scaleX(0.9);-webkit-text-stroke:0.2px;">11</div>
<div class="t" style="top:247.00px;height:12px;line-height:12px;font-size:8.5px;color:#23262b;left:249.20px;transform-origin:0 50%;transform:scaleX(0.783);-webkit-text-stroke:0.32px #23262b;">7325 10TH ST</div>
<div class="t" style="top:247.00px;height:12px;line-height:12px;font-size:8.5px;color:#23262b;left:351.00px;transform-origin:0 50%;transform:scaleX(0.823);-webkit-text-stroke:0.32px #23262b;">RIO LINDA</div>
<div class="t" style="top:247.00px;height:12px;line-height:12px;font-size:8.5px;color:#23262b;right:544.90px;transform-origin:100% 50%;transform:scaleX(0.845);-webkit-text-stroke:0.32px #23262b;">95673</div>
<div class="t" style="top:247.00px;height:12px;line-height:12px;font-size:8.5px;color:#23262b;left:449.00px;transform-origin:0 50%;transform:scaleX(0.8);-webkit-text-stroke:0.32px #23262b;">CA</div>
<div class="t" style="top:247.00px;height:12px;line-height:12px;font-size:8.5px;color:#23262b;right:503.20px;transform-origin:100% 50%;transform:scaleX(0.845);-webkit-text-stroke:0.32px #23262b;">3</div>
<div class="t" style="top:247.00px;height:12px;line-height:12px;font-size:8.5px;color:#23262b;right:480.40px;transform-origin:100% 50%;transform:scaleX(0.845);-webkit-text-stroke:0.32px #23262b;">2</div>
<div class="t" style="top:247.00px;height:12px;line-height:12px;font-size:8.5px;color:#23262b;right:454.50px;transform-origin:100% 50%;transform:scaleX(0.845);-webkit-text-stroke:0.32px #23262b;">1146</div>
<div class="t" style="top:247.00px;height:12px;line-height:12px;font-size:8.5px;color:#23262b;left:540.00px;transform-origin:0 50%;transform:scaleX(0.93);-webkit-text-stroke:0.32px #23262b;">Residential</div>
<div class="t" style="top:247.00px;height:12px;line-height:12px;font-size:8.5px;color:#23262b;right:378.70px;transform-origin:100% 50%;transform:scaleX(0.845);-webkit-text-stroke:0.32px #23262b;">98937</div>
<div class="t" style="top:247.00px;height:12px;line-height:12px;font-size:8.5px;color:#23262b;right:339.80px;transform-origin:100% 50%;transform:scaleX(0.845);-webkit-text-stroke:0.32px #23262b;">38.700909</div>
<div class="t" style="top:247.00px;height:12px;line-height:12px;font-size:8.5px;color:#23262b;right:293.90px;transform-origin:100% 50%;transform:scaleX(0.845);-webkit-text-stroke:0.32px #23262b;">-121.442979</div>
<div class="t" style="top:258.00px;height:12px;line-height:12px;font-size:8.5px;color:#333;left:140.50px;width:200px;text-align:center;transform-origin:50% 50%;transform:scaleX(0.9);-webkit-text-stroke:0.2px;">12</div>
<div class="t" style="top:258.00px;height:12px;line-height:12px;font-size:8.5px;color:#23262b;left:249.20px;transform-origin:0 50%;transform:scaleX(0.829);-webkit-text-stroke:0.32px #23262b;">645 MORRISON AVE</div>
<div class="t" style="top:258.00px;height:12px;line-height:12px;font-size:8.5px;color:#23262b;left:351.00px;transform-origin:0 50%;transform:scaleX(0.819);-webkit-text-stroke:0.32px #23262b;">SACRAMENTO</div>
<div class="t" style="top:258.00px;height:12px;line-height:12px;font-size:8.5px;color:#23262b;right:544.90px;transform-origin:100% 50%;transform:scaleX(0.845);-webkit-text-stroke:0.32px #23262b;">95838</div>
<div class="t" style="top:258.00px;height:12px;line-height:12px;font-size:8.5px;color:#23262b;left:449.00px;transform-origin:0 50%;transform:scaleX(0.8);-webkit-text-stroke:0.32px #23262b;">CA</div>
<div class="t" style="top:258.00px;height:12px;line-height:12px;font-size:8.5px;color:#23262b;right:503.20px;transform-origin:100% 50%;transform:scaleX(0.845);-webkit-text-stroke:0.32px #23262b;">3</div>
<div class="t" style="top:258.00px;height:12px;line-height:12px;font-size:8.5px;color:#23262b;right:480.40px;transform-origin:100% 50%;transform:scaleX(0.845);-webkit-text-stroke:0.32px #23262b;">2</div>
<div class="t" style="top:258.00px;height:12px;line-height:12px;font-size:8.5px;color:#23262b;right:454.50px;transform-origin:100% 50%;transform:scaleX(0.845);-webkit-text-stroke:0.32px #23262b;">909</div>
<div class="t" style="top:258.00px;height:12px;line-height:12px;font-size:8.5px;color:#23262b;left:540.00px;transform-origin:0 50%;transform:scaleX(0.93);-webkit-text-stroke:0.32px #23262b;">Residential</div>
<div class="t" style="top:258.00px;height:12px;line-height:12px;font-size:8.5px;color:#23262b;right:378.70px;transform-origin:100% 50%;transform:scaleX(0.845);-webkit-text-stroke:0.32px #23262b;">100309</div>
<div class="t" style="top:258.00px;height:12px;line-height:12px;font-size:8.5px;color:#23262b;right:339.80px;transform-origin:100% 50%;transform:scaleX(0.845);-webkit-text-stroke:0.32px #23262b;">38.637663</div>
<div class="t" style="top:258.00px;height:12px;line-height:12px;font-size:8.5px;color:#23262b;right:293.90px;transform-origin:100% 50%;transform:scaleX(0.845);-webkit-text-stroke:0.32px #23262b;">-121.45152</div>
<div class="t" style="top:269.00px;height:12px;line-height:12px;font-size:8.5px;color:#333;left:140.50px;width:200px;text-align:center;transform-origin:50% 50%;transform:scaleX(0.9);-webkit-text-stroke:0.2px;">13</div>
<div class="t" style="top:269.00px;height:12px;line-height:12px;font-size:8.5px;color:#23262b;left:249.20px;transform-origin:0 50%;transform:scaleX(0.837);-webkit-text-stroke:0.32px #23262b;">4085 FAWN CIR</div>
<div class="t" style="top:269.00px;height:12px;line-height:12px;font-size:8.5px;color:#23262b;left:351.00px;transform-origin:0 50%;transform:scaleX(0.819);-webkit-text-stroke:0.32px #23262b;">SACRAMENTO</div>
<div class="t" style="top:269.00px;height:12px;line-height:12px;font-size:8.5px;color:#23262b;right:544.90px;transform-origin:100% 50%;transform:scaleX(0.845);-webkit-text-stroke:0.32px #23262b;">95823</div>
<div class="t" style="top:269.00px;height:12px;line-height:12px;font-size:8.5px;color:#23262b;left:449.00px;transform-origin:0 50%;transform:scaleX(0.8);-webkit-text-stroke:0.32px #23262b;">CA</div>
<div class="t" style="top:269.00px;height:12px;line-height:12px;font-size:8.5px;color:#23262b;right:503.20px;transform-origin:100% 50%;transform:scaleX(0.845);-webkit-text-stroke:0.32px #23262b;">3</div>
<div class="t" style="top:269.00px;height:12px;line-height:12px;font-size:8.5px;color:#23262b;right:480.40px;transform-origin:100% 50%;transform:scaleX(0.845);-webkit-text-stroke:0.32px #23262b;">2</div>
<div class="t" style="top:269.00px;height:12px;line-height:12px;font-size:8.5px;color:#23262b;right:454.50px;transform-origin:100% 50%;transform:scaleX(0.845);-webkit-text-stroke:0.32px #23262b;">1289</div>
<div class="t" style="top:269.00px;height:12px;line-height:12px;font-size:8.5px;color:#23262b;left:540.00px;transform-origin:0 50%;transform:scaleX(0.93);-webkit-text-stroke:0.32px #23262b;">Residential</div>
<div class="t" style="top:269.00px;height:12px;line-height:12px;font-size:8.5px;color:#23262b;right:378.70px;transform-origin:100% 50%;transform:scaleX(0.845);-webkit-text-stroke:0.32px #23262b;">106250</div>
<div class="t" style="top:269.00px;height:12px;line-height:12px;font-size:8.5px;color:#23262b;right:339.80px;transform-origin:100% 50%;transform:scaleX(0.845);-webkit-text-stroke:0.32px #23262b;">38.470746</div>
<div class="t" style="top:269.00px;height:12px;line-height:12px;font-size:8.5px;color:#23262b;right:293.90px;transform-origin:100% 50%;transform:scaleX(0.845);-webkit-text-stroke:0.32px #23262b;">-121.458918</div>
<div class="t" style="top:281.00px;height:12px;line-height:12px;font-size:8.5px;color:#333;left:140.50px;width:200px;text-align:center;transform-origin:50% 50%;transform:scaleX(0.9);-webkit-text-stroke:0.2px;">14</div>
<div class="t" style="top:281.00px;height:12px;line-height:12px;font-size:8.5px;color:#23262b;left:249.20px;transform-origin:0 50%;transform:scaleX(0.805);-webkit-text-stroke:0.32px #23262b;">2930 LA ROSA RD</div>
<div class="t" style="top:281.00px;height:12px;line-height:12px;font-size:8.5px;color:#23262b;left:351.00px;transform-origin:0 50%;transform:scaleX(0.819);-webkit-text-stroke:0.32px #23262b;">SACRAMENTO</div>
<div class="t" style="top:281.00px;height:12px;line-height:12px;font-size:8.5px;color:#23262b;right:544.90px;transform-origin:100% 50%;transform:scaleX(0.845);-webkit-text-stroke:0.32px #23262b;">95815</div>
<div class="t" style="top:281.00px;height:12px;line-height:12px;font-size:8.5px;color:#23262b;left:449.00px;transform-origin:0 50%;transform:scaleX(0.8);-webkit-text-stroke:0.32px #23262b;">CA</div>
<div class="t" style="top:281.00px;height:12px;line-height:12px;font-size:8.5px;color:#23262b;right:503.20px;transform-origin:100% 50%;transform:scaleX(0.845);-webkit-text-stroke:0.32px #23262b;">1</div>
<div class="t" style="top:281.00px;height:12px;line-height:12px;font-size:8.5px;color:#23262b;right:480.40px;transform-origin:100% 50%;transform:scaleX(0.845);-webkit-text-stroke:0.32px #23262b;">1</div>
<div class="t" style="top:281.00px;height:12px;line-height:12px;font-size:8.5px;color:#23262b;right:454.50px;transform-origin:100% 50%;transform:scaleX(0.845);-webkit-text-stroke:0.32px #23262b;">871</div>
<div class="t" style="top:281.00px;height:12px;line-height:12px;font-size:8.5px;color:#23262b;left:540.00px;transform-origin:0 50%;transform:scaleX(0.93);-webkit-text-stroke:0.32px #23262b;">Residential</div>
<div class="t" style="top:281.00px;height:12px;line-height:12px;font-size:8.5px;color:#23262b;right:378.70px;transform-origin:100% 50%;transform:scaleX(0.845);-webkit-text-stroke:0.32px #23262b;">106852</div>
<div class="t" style="top:281.00px;height:12px;line-height:12px;font-size:8.5px;color:#23262b;right:339.80px;transform-origin:100% 50%;transform:scaleX(0.845);-webkit-text-stroke:0.32px #23262b;">38.618698</div>
<div class="t" style="top:281.00px;height:12px;line-height:12px;font-size:8.5px;color:#23262b;right:293.90px;transform-origin:100% 50%;transform:scaleX(0.845);-webkit-text-stroke:0.32px #23262b;">-121.435833</div>
<div class="t" style="top:292.00px;height:12px;line-height:12px;font-size:8.5px;color:#333;left:140.50px;width:200px;text-align:center;transform-origin:50% 50%;transform:scaleX(0.9);-webkit-text-stroke:0.2px;">15</div>
<div class="t" style="top:292.00px;height:12px;line-height:12px;font-size:8.5px;color:#23262b;left:249.20px;transform-origin:0 50%;transform:scaleX(0.824);-webkit-text-stroke:0.32px #23262b;">2113 KIRK WAY</div>
<div class="t" style="top:292.00px;height:12px;line-height:12px;font-size:8.5px;color:#23262b;left:351.00px;transform-origin:0 50%;transform:scaleX(0.819);-webkit-text-stroke:0.32px #23262b;">SACRAMENTO</div>
<div class="t" style="top:292.00px;height:12px;line-height:12px;font-size:8.5px;color:#23262b;right:544.90px;transform-origin:100% 50%;transform:scaleX(0.845);-webkit-text-stroke:0.32px #23262b;">95822</div>
<div class="t" style="top:292.00px;height:12px;line-height:12px;font-size:8.5px;color:#23262b;left:449.00px;transform-origin:0 50%;transform:scaleX(0.8);-webkit-text-stroke:0.32px #23262b;">CA</div>
<div class="t" style="top:292.00px;height:12px;line-height:12px;font-size:8.5px;color:#23262b;right:503.20px;transform-origin:100% 50%;transform:scaleX(0.845);-webkit-text-stroke:0.32px #23262b;">3</div>
<div class="t" style="top:292.00px;height:12px;line-height:12px;font-size:8.5px;color:#23262b;right:480.40px;transform-origin:100% 50%;transform:scaleX(0.845);-webkit-text-stroke:0.32px #23262b;">1</div>
<div class="t" style="top:292.00px;height:12px;line-height:12px;font-size:8.5px;color:#23262b;right:454.50px;transform-origin:100% 50%;transform:scaleX(0.845);-webkit-text-stroke:0.32px #23262b;">1020</div>
<div class="t" style="top:292.00px;height:12px;line-height:12px;font-size:8.5px;color:#23262b;left:540.00px;transform-origin:0 50%;transform:scaleX(0.93);-webkit-text-stroke:0.32px #23262b;">Residential</div>
<div class="t" style="top:292.00px;height:12px;line-height:12px;font-size:8.5px;color:#23262b;right:378.70px;transform-origin:100% 50%;transform:scaleX(0.845);-webkit-text-stroke:0.32px #23262b;">107502</div>
<div class="t" style="top:292.00px;height:12px;line-height:12px;font-size:8.5px;color:#23262b;right:339.80px;transform-origin:100% 50%;transform:scaleX(0.845);-webkit-text-stroke:0.32px #23262b;">38.482215</div>
<div class="t" style="top:292.00px;height:12px;line-height:12px;font-size:8.5px;color:#23262b;right:293.90px;transform-origin:100% 50%;transform:scaleX(0.845);-webkit-text-stroke:0.32px #23262b;">-121.492603</div>
<div class="t" style="top:303.00px;height:12px;line-height:12px;font-size:8.5px;color:#333;left:140.50px;width:200px;text-align:center;transform-origin:50% 50%;transform:scaleX(0.9);-webkit-text-stroke:0.2px;">16</div>
<div class="t" style="top:303.00px;height:12px;line-height:12px;font-size:8.5px;color:#23262b;left:249.20px;transform-origin:0 50%;transform:scaleX(0.832);-webkit-text-stroke:0.32px #23262b;">4533 LOCH HAVEN WAY</div>
<div class="t" style="top:303.00px;height:12px;line-height:12px;font-size:8.5px;color:#23262b;left:351.00px;transform-origin:0 50%;transform:scaleX(0.819);-webkit-text-stroke:0.32px #23262b;">SACRAMENTO</div>
<div class="t" style="top:303.00px;height:12px;line-height:12px;font-size:8.5px;color:#23262b;right:544.90px;transform-origin:100% 50%;transform:scaleX(0.845);-webkit-text-stroke:0.32px #23262b;">95842</div>
<div class="t" style="top:303.00px;height:12px;line-height:12px;font-size:8.5px;color:#23262b;left:449.00px;transform-origin:0 50%;transform:scaleX(0.8);-webkit-text-stroke:0.32px #23262b;">CA</div>
<div class="t" style="top:303.00px;height:12px;line-height:12px;font-size:8.5px;color:#23262b;right:503.20px;transform-origin:100% 50%;transform:scaleX(0.845);-webkit-text-stroke:0.32px #23262b;">2</div>
<div class="t" style="top:303.00px;height:12px;line-height:12px;font-size:8.5px;color:#23262b;right:480.40px;transform-origin:100% 50%;transform:scaleX(0.845);-webkit-text-stroke:0.32px #23262b;">2</div>
<div class="t" style="top:303.00px;height:12px;line-height:12px;font-size:8.5px;color:#23262b;right:454.50px;transform-origin:100% 50%;transform:scaleX(0.845);-webkit-text-stroke:0.32px #23262b;">1022</div>
<div class="t" style="top:303.00px;height:12px;line-height:12px;font-size:8.5px;color:#23262b;left:540.00px;transform-origin:0 50%;transform:scaleX(0.93);-webkit-text-stroke:0.32px #23262b;">Residential</div>
<div class="t" style="top:303.00px;height:12px;line-height:12px;font-size:8.5px;color:#23262b;right:378.70px;transform-origin:100% 50%;transform:scaleX(0.845);-webkit-text-stroke:0.32px #23262b;">108750</div>
<div class="t" style="top:303.00px;height:12px;line-height:12px;font-size:8.5px;color:#23262b;right:339.80px;transform-origin:100% 50%;transform:scaleX(0.845);-webkit-text-stroke:0.32px #23262b;">38.672914</div>
<div class="t" style="top:303.00px;height:12px;line-height:12px;font-size:8.5px;color:#23262b;right:293.90px;transform-origin:100% 50%;transform:scaleX(0.845);-webkit-text-stroke:0.32px #23262b;">-121.35934</div>
<div class="t" style="top:314.00px;height:12px;line-height:12px;font-size:8.5px;color:#333;left:140.50px;width:200px;text-align:center;transform-origin:50% 50%;transform:scaleX(0.9);-webkit-text-stroke:0.2px;">17</div>
<div class="t" style="top:314.00px;height:12px;line-height:12px;font-size:8.5px;color:#23262b;left:249.20px;transform-origin:0 50%;transform:scaleX(0.821);-webkit-text-stroke:0.32px #23262b;">7340 HAMDEN PL</div>
<div class="t" style="top:314.00px;height:12px;line-height:12px;font-size:8.5px;color:#23262b;left:351.00px;transform-origin:0 50%;transform:scaleX(0.819);-webkit-text-stroke:0.32px #23262b;">SACRAMENTO</div>
<div class="t" style="top:314.00px;height:12px;line-height:12px;font-size:8.5px;color:#23262b;right:544.90px;transform-origin:100% 50%;transform:scaleX(0.845);-webkit-text-stroke:0.32px #23262b;">95842</div>
<div class="t" style="top:314.00px;height:12px;line-height:12px;font-size:8.5px;color:#23262b;left:449.00px;transform-origin:0 50%;transform:scaleX(0.8);-webkit-text-stroke:0.32px #23262b;">CA</div>
<div class="t" style="top:314.00px;height:12px;line-height:12px;font-size:8.5px;color:#23262b;right:503.20px;transform-origin:100% 50%;transform:scaleX(0.845);-webkit-text-stroke:0.32px #23262b;">2</div>
<div class="t" style="top:314.00px;height:12px;line-height:12px;font-size:8.5px;color:#23262b;right:480.40px;transform-origin:100% 50%;transform:scaleX(0.845);-webkit-text-stroke:0.32px #23262b;">2</div>
<div class="t" style="top:314.00px;height:12px;line-height:12px;font-size:8.5px;color:#23262b;right:454.50px;transform-origin:100% 50%;transform:scaleX(0.845);-webkit-text-stroke:0.32px #23262b;">1134</div>
<div class="t" style="top:314.00px;height:12px;line-height:12px;font-size:8.5px;color:#23262b;left:540.00px;transform-origin:0 50%;transform:scaleX(0.93);-webkit-text-stroke:0.32px #23262b;">Condo</div>
<div class="t" style="top:314.00px;height:12px;line-height:12px;font-size:8.5px;color:#23262b;right:378.70px;transform-origin:100% 50%;transform:scaleX(0.845);-webkit-text-stroke:0.32px #23262b;">110700</div>
<div class="t" style="top:314.00px;height:12px;line-height:12px;font-size:8.5px;color:#23262b;right:339.80px;transform-origin:100% 50%;transform:scaleX(0.845);-webkit-text-stroke:0.32px #23262b;">38.700051</div>
<div class="t" style="top:314.00px;height:12px;line-height:12px;font-size:8.5px;color:#23262b;right:293.90px;transform-origin:100% 50%;transform:scaleX(0.845);-webkit-text-stroke:0.32px #23262b;">-121.351278</div>
<div class="t" style="top:325.00px;height:12px;line-height:12px;font-size:8.5px;color:#333;left:140.50px;width:200px;text-align:center;transform-origin:50% 50%;transform:scaleX(0.9);-webkit-text-stroke:0.2px;">18</div>
<div class="t" style="top:325.00px;height:12px;line-height:12px;font-size:8.5px;color:#23262b;left:249.20px;transform-origin:0 50%;transform:scaleX(0.783);-webkit-text-stroke:0.32px #23262b;">6715 6TH ST</div>
<div class="t" style="top:325.00px;height:12px;line-height:12px;font-size:8.5px;color:#23262b;left:351.00px;transform-origin:0 50%;transform:scaleX(0.823);-webkit-text-stroke:0.32px #23262b;">RIO LINDA</div>
<div class="t" style="top:325.00px;height:12px;line-height:12px;font-size:8.5px;color:#23262b;right:544.90px;transform-origin:100% 50%;transform:scaleX(0.845);-webkit-text-stroke:0.32px #23262b;">95673</div>
<div class="t" style="top:325.00px;height:12px;line-height:12px;font-size:8.5px;color:#23262b;left:449.00px;transform-origin:0 50%;transform:scaleX(0.8);-webkit-text-stroke:0.32px #23262b;">CA</div>
<div class="t" style="top:325.00px;height:12px;line-height:12px;font-size:8.5px;color:#23262b;right:503.20px;transform-origin:100% 50%;transform:scaleX(0.845);-webkit-text-stroke:0.32px #23262b;">2</div>
<div class="t" style="top:325.00px;height:12px;line-height:12px;font-size:8.5px;color:#23262b;right:480.40px;transform-origin:100% 50%;transform:scaleX(0.845);-webkit-text-stroke:0.32px #23262b;">1</div>
<div class="t" style="top:325.00px;height:12px;line-height:12px;font-size:8.5px;color:#23262b;right:454.50px;transform-origin:100% 50%;transform:scaleX(0.845);-webkit-text-stroke:0.32px #23262b;">844</div>
<div class="t" style="top:325.00px;height:12px;line-height:12px;font-size:8.5px;color:#23262b;left:540.00px;transform-origin:0 50%;transform:scaleX(0.93);-webkit-text-stroke:0.32px #23262b;">Residential</div>
<div class="t" style="top:325.00px;height:12px;line-height:12px;font-size:8.5px;color:#23262b;right:378.70px;transform-origin:100% 50%;transform:scaleX(0.845);-webkit-text-stroke:0.32px #23262b;">113263</div>
<div class="t" style="top:325.00px;height:12px;line-height:12px;font-size:8.5px;color:#23262b;right:339.80px;transform-origin:100% 50%;transform:scaleX(0.845);-webkit-text-stroke:0.32px #23262b;">38.689591</div>
<div class="t" style="top:325.00px;height:12px;line-height:12px;font-size:8.5px;color:#23262b;right:293.90px;transform-origin:100% 50%;transform:scaleX(0.845);-webkit-text-stroke:0.32px #23262b;">-121.452239</div>
<div class="t" style="top:337.00px;height:12px;line-height:12px;font-size:8.5px;color:#333;left:140.50px;width:200px;text-align:center;transform-origin:50% 50%;transform:scaleX(0.9);-webkit-text-stroke:0.2px;">19</div>
<div class="t" style="top:337.00px;height:12px;line-height:12px;font-size:8.5px;color:#23262b;left:249.20px;transform-origin:0 50%;transform:scaleX(0.804);-webkit-text-stroke:0.32px #23262b;">6236 LONGFORD DR</div>
<div class="t" style="top:337.00px;height:12px;line-height:12px;font-size:8.5px;color:#23262b;left:319.00px;transform-origin:0 50%;transform:scaleX(0.856);-webkit-text-stroke:0.32px #23262b;">Unit 1</div>
<div class="t" style="top:337.00px;height:12px;line-height:12px;font-size:8.5px;color:#23262b;left:351.00px;transform-origin:0 50%;transform:scaleX(0.769);-webkit-text-stroke:0.32px #23262b;">CITRUS HEIGHTS</div>
<div class="t" style="top:337.00px;height:12px;line-height:12px;font-size:8.5px;color:#23262b;right:544.90px;transform-origin:100% 50%;transform:scaleX(0.845);-webkit-text-stroke:0.32px #23262b;">95621</div>
<div class="t" style="top:337.00px;height:12px;line-height:12px;font-size:8.5px;color:#23262b;left:449.00px;transform-origin:0 50%;transform:scaleX(0.8);-webkit-text-stroke:0.32px #23262b;">CA</div>
<div class="t" style="top:337.00px;height:12px;line-height:12px;font-size:8.5px;color:#23262b;right:503.20px;transform-origin:100% 50%;transform:scaleX(0.845);-webkit-text-stroke:0.32px #23262b;">2</div>
<div class="t" style="top:337.00px;height:12px;line-height:12px;font-size:8.5px;color:#23262b;right:480.40px;transform-origin:100% 50%;transform:scaleX(0.845);-webkit-text-stroke:0.32px #23262b;">1</div>
<div class="t" style="top:337.00px;height:12px;line-height:12px;font-size:8.5px;color:#23262b;right:454.50px;transform-origin:100% 50%;transform:scaleX(0.845);-webkit-text-stroke:0.32px #23262b;">795</div>
<div class="t" style="top:337.00px;height:12px;line-height:12px;font-size:8.5px;color:#23262b;left:540.00px;transform-origin:0 50%;transform:scaleX(0.93);-webkit-text-stroke:0.32px #23262b;">Condo</div>
<div class="t" style="top:337.00px;height:12px;line-height:12px;font-size:8.5px;color:#23262b;right:378.70px;transform-origin:100% 50%;transform:scaleX(0.845);-webkit-text-stroke:0.32px #23262b;">116250</div>
<div class="t" style="top:337.00px;height:12px;line-height:12px;font-size:8.5px;color:#23262b;right:339.80px;transform-origin:100% 50%;transform:scaleX(0.845);-webkit-text-stroke:0.32px #23262b;">38.679776</div>
<div class="t" style="top:337.00px;height:12px;line-height:12px;font-size:8.5px;color:#23262b;right:293.90px;transform-origin:100% 50%;transform:scaleX(0.845);-webkit-text-stroke:0.32px #23262b;">-121.314089</div>
<div class="t" style="top:348.00px;height:12px;line-height:12px;font-size:8.5px;color:#333;left:140.50px;width:200px;text-align:center;transform-origin:50% 50%;transform:scaleX(0.9);-webkit-text-stroke:0.2px;">20</div>
<div class="t" style="top:348.00px;height:12px;line-height:12px;font-size:8.5px;color:#23262b;left:249.20px;transform-origin:0 50%;transform:scaleX(0.826);-webkit-text-stroke:0.32px #23262b;">250 PERALTA AVE</div>
<div class="t" style="top:348.00px;height:12px;line-height:12px;font-size:8.5px;color:#23262b;left:351.00px;transform-origin:0 50%;transform:scaleX(0.819);-webkit-text-stroke:0.32px #23262b;">SACRAMENTO</div>
<div class="t" style="top:348.00px;height:12px;line-height:12px;font-size:8.5px;color:#23262b;right:544.90px;transform-origin:100% 50%;transform:scaleX(0.845);-webkit-text-stroke:0.32px #23262b;">95833</div>
<div class="t" style="top:348.00px;height:12px;line-height:12px;font-size:8.5px;color:#23262b;left:449.00px;transform-origin:0 50%;transform:scaleX(0.8);-webkit-text-stroke:0.32px #23262b;">CA</div>
<div class="t" style="top:348.00px;height:12px;line-height:12px;font-size:8.5px;color:#23262b;right:503.20px;transform-origin:100% 50%;transform:scaleX(0.845);-webkit-text-stroke:0.32px #23262b;">2</div>
<div class="t" style="top:348.00px;height:12px;line-height:12px;font-size:8.5px;color:#23262b;right:480.40px;transform-origin:100% 50%;transform:scaleX(0.845);-webkit-text-stroke:0.32px #23262b;">1</div>
<div class="t" style="top:348.00px;height:12px;line-height:12px;font-size:8.5px;color:#23262b;right:454.50px;transform-origin:100% 50%;transform:scaleX(0.845);-webkit-text-stroke:0.32px #23262b;">588</div>
<div class="t" style="top:348.00px;height:12px;line-height:12px;font-size:8.5px;color:#23262b;left:540.00px;transform-origin:0 50%;transform:scaleX(0.93);-webkit-text-stroke:0.32px #23262b;">Residential</div>
<div class="t" style="top:348.00px;height:12px;line-height:12px;font-size:8.5px;color:#23262b;right:378.70px;transform-origin:100% 50%;transform:scaleX(0.845);-webkit-text-stroke:0.32px #23262b;">120000</div>
<div class="t" style="top:348.00px;height:12px;line-height:12px;font-size:8.5px;color:#23262b;right:339.80px;transform-origin:100% 50%;transform:scaleX(0.845);-webkit-text-stroke:0.32px #23262b;">38.612099</div>
<div class="t" style="top:348.00px;height:12px;line-height:12px;font-size:8.5px;color:#23262b;right:293.90px;transform-origin:100% 50%;transform:scaleX(0.845);-webkit-text-stroke:0.32px #23262b;">-121.469095</div>
<div class="t" style="top:359.00px;height:12px;line-height:12px;font-size:8.5px;color:#333;left:140.50px;width:200px;text-align:center;transform-origin:50% 50%;transform:scaleX(0.9);-webkit-text-stroke:0.2px;">21</div>
<div class="t" style="top:359.00px;height:12px;line-height:12px;font-size:8.5px;color:#23262b;left:249.20px;transform-origin:0 50%;transform:scaleX(0.803);-webkit-text-stroke:0.32px #23262b;">113 LEEWILL AVE</div>
<div class="t" style="top:359.00px;height:12px;line-height:12px;font-size:8.5px;color:#23262b;left:351.00px;transform-origin:0 50%;transform:scaleX(0.823);-webkit-text-stroke:0.32px #23262b;">RIO LINDA</div>
<div class="t" style="top:359.00px;height:12px;line-height:12px;font-size:8.5px;color:#23262b;right:544.90px;transform-origin:100% 50%;transform:scaleX(0.845);-webkit-text-stroke:0.32px #23262b;">95673</div>
<div class="t" style="top:359.00px;height:12px;line-height:12px;font-size:8.5px;color:#23262b;left:449.00px;transform-origin:0 50%;transform:scaleX(0.8);-webkit-text-stroke:0.32px #23262b;">CA</div>
<div class="t" style="top:359.00px;height:12px;line-height:12px;font-size:8.5px;color:#23262b;right:503.20px;transform-origin:100% 50%;transform:scaleX(0.845);-webkit-text-stroke:0.32px #23262b;">3</div>
<div class="t" style="top:359.00px;height:12px;line-height:12px;font-size:8.5px;color:#23262b;right:480.40px;transform-origin:100% 50%;transform:scaleX(0.845);-webkit-text-stroke:0.32px #23262b;">2</div>
<div class="t" style="top:359.00px;height:12px;line-height:12px;font-size:8.5px;color:#23262b;right:454.50px;transform-origin:100% 50%;transform:scaleX(0.845);-webkit-text-stroke:0.32px #23262b;">1356</div>
<div class="t" style="top:359.00px;height:12px;line-height:12px;font-size:8.5px;color:#23262b;left:540.00px;transform-origin:0 50%;transform:scaleX(0.93);-webkit-text-stroke:0.32px #23262b;">Residential</div>
<div class="t" style="top:359.00px;height:12px;line-height:12px;font-size:8.5px;color:#23262b;right:378.70px;transform-origin:100% 50%;transform:scaleX(0.845);-webkit-text-stroke:0.32px #23262b;">121630</div>
<div class="t" style="top:359.00px;height:12px;line-height:12px;font-size:8.5px;color:#23262b;right:339.80px;transform-origin:100% 50%;transform:scaleX(0.845);-webkit-text-stroke:0.32px #23262b;">38.689999</div>
<div class="t" style="top:359.00px;height:12px;line-height:12px;font-size:8.5px;color:#23262b;right:293.90px;transform-origin:100% 50%;transform:scaleX(0.845);-webkit-text-stroke:0.32px #23262b;">-121.46322</div>
<div class="t" style="top:370.00px;height:12px;line-height:12px;font-size:8.5px;color:#333;left:140.50px;width:200px;text-align:center;transform-origin:50% 50%;transform:scaleX(0.9);-webkit-text-stroke:0.2px;">22</div>
<div class="t" style="top:370.00px;height:12px;line-height:12px;font-size:8.5px;color:#23262b;left:249.20px;transform-origin:0 50%;transform:scaleX(0.825);-webkit-text-stroke:0.32px #23262b;">6118 STONEHAND AVE</div>
<div class="t" style="top:370.00px;height:12px;line-height:12px;font-size:8.5px;color:#23262b;left:351.00px;transform-origin:0 50%;transform:scaleX(0.769);-webkit-text-stroke:0.32px #23262b;">CITRUS HEIGHTS</div>
<div class="t" style="top:370.00px;height:12px;line-height:12px;font-size:8.5px;color:#23262b;right:544.90px;transform-origin:100% 50%;transform:scaleX(0.845);-webkit-text-stroke:0.32px #23262b;">95621</div>
<div class="t" style="top:370.00px;height:12px;line-height:12px;font-size:8.5px;color:#23262b;left:449.00px;transform-origin:0 50%;transform:scaleX(0.8);-webkit-text-stroke:0.32px #23262b;">CA</div>
<div class="t" style="top:370.00px;height:12px;line-height:12px;font-size:8.5px;color:#23262b;right:503.20px;transform-origin:100% 50%;transform:scaleX(0.845);-webkit-text-stroke:0.32px #23262b;">3</div>
<div class="t" style="top:370.00px;height:12px;line-height:12px;font-size:8.5px;color:#23262b;right:480.40px;transform-origin:100% 50%;transform:scaleX(0.845);-webkit-text-stroke:0.32px #23262b;">2</div>
<div class="t" style="top:370.00px;height:12px;line-height:12px;font-size:8.5px;color:#23262b;right:454.50px;transform-origin:100% 50%;transform:scaleX(0.845);-webkit-text-stroke:0.32px #23262b;">1118</div>
<div class="t" style="top:370.00px;height:12px;line-height:12px;font-size:8.5px;color:#23262b;left:540.00px;transform-origin:0 50%;transform:scaleX(0.93);-webkit-text-stroke:0.32px #23262b;">Residential</div>
<div class="t" style="top:370.00px;height:12px;line-height:12px;font-size:8.5px;color:#23262b;right:378.70px;transform-origin:100% 50%;transform:scaleX(0.845);-webkit-text-stroke:0.32px #23262b;">122000</div>
<div class="t" style="top:370.00px;height:12px;line-height:12px;font-size:8.5px;color:#23262b;right:339.80px;transform-origin:100% 50%;transform:scaleX(0.845);-webkit-text-stroke:0.32px #23262b;">38.707851</div>
<div class="t" style="top:370.00px;height:12px;line-height:12px;font-size:8.5px;color:#23262b;right:293.90px;transform-origin:100% 50%;transform:scaleX(0.845);-webkit-text-stroke:0.32px #23262b;">-121.320707</div>
<div class="t" style="top:381.00px;height:12px;line-height:12px;font-size:8.5px;color:#333;left:140.50px;width:200px;text-align:center;transform-origin:50% 50%;transform:scaleX(0.9);-webkit-text-stroke:0.2px;">23</div>
<div class="t" style="top:381.00px;height:12px;line-height:12px;font-size:8.5px;color:#23262b;left:249.20px;transform-origin:0 50%;transform:scaleX(0.847);-webkit-text-stroke:0.32px #23262b;">4882 BANDALIN WAY</div>
<div class="t" style="top:381.00px;height:12px;line-height:12px;font-size:8.5px;color:#23262b;left:351.00px;transform-origin:0 50%;transform:scaleX(0.819);-webkit-text-stroke:0.32px #23262b;">SACRAMENTO</div>
<div class="t" style="top:381.00px;height:12px;line-height:12px;font-size:8.5px;color:#23262b;right:544.90px;transform-origin:100% 50%;transform:scaleX(0.845);-webkit-text-stroke:0.32px #23262b;">95823</div>
<div class="t" style="top:381.00px;height:12px;line-height:12px;font-size:8.5px;color:#23262b;left:449.00px;transform-origin:0 50%;transform:scaleX(0.8);-webkit-text-stroke:0.32px #23262b;">CA</div>
<div class="t" style="top:381.00px;height:12px;line-height:12px;font-size:8.5px;color:#23262b;right:503.20px;transform-origin:100% 50%;transform:scaleX(0.845);-webkit-text-stroke:0.32px #23262b;">4</div>
<div class="t" style="top:381.00px;height:12px;line-height:12px;font-size:8.5px;color:#23262b;right:480.40px;transform-origin:100% 50%;transform:scaleX(0.845);-webkit-text-stroke:0.32px #23262b;">2</div>
<div class="t" style="top:381.00px;height:12px;line-height:12px;font-size:8.5px;color:#23262b;right:454.50px;transform-origin:100% 50%;transform:scaleX(0.845);-webkit-text-stroke:0.32px #23262b;">1329</div>
<div class="t" style="top:381.00px;height:12px;line-height:12px;font-size:8.5px;color:#23262b;left:540.00px;transform-origin:0 50%;transform:scaleX(0.93);-webkit-text-stroke:0.32px #23262b;">Residential</div>
<div class="t" style="top:381.00px;height:12px;line-height:12px;font-size:8.5px;color:#23262b;right:378.70px;transform-origin:100% 50%;transform:scaleX(0.845);-webkit-text-stroke:0.32px #23262b;">122682</div>
<div class="t" style="top:381.00px;height:12px;line-height:12px;font-size:8.5px;color:#23262b;right:339.80px;transform-origin:100% 50%;transform:scaleX(0.845);-webkit-text-stroke:0.32px #23262b;">38.468173</div>
<div class="t" style="top:381.00px;height:12px;line-height:12px;font-size:8.5px;color:#23262b;right:293.90px;transform-origin:100% 50%;transform:scaleX(0.845);-webkit-text-stroke:0.32px #23262b;">-121.444071</div>
<div class="r" style="left:246.1px;top:133.20px;width:104.60px;height:14.20px;border:1.7px solid #217346;box-sizing:border-box;"></div>
<div class="r" style="left:348.70px;top:145.60px;width:2.60px;height:2.60px;background:#217346;border:0.5px solid #fff;"></div>
<div class="r" style="left:740.60px;top:124.00px;width:10.80px;height:269.90px;background:#dadada;"></div>
<div class="r" style="left:751.40px;top:124.00px;width:0.60px;height:269.90px;background:#ececec;"></div>
<div class="r" style="left:740.60px;top:124.00px;width:1.00px;height:269.90px;background:#cfcfcf;"></div>
<div class="r" style="left:740.60px;top:124.00px;width:11.40px;height:1.00px;background:#e6e6e6;"></div>
<div class="r" style="left:742.00px;top:125.10px;width:8.60px;height:8.50px;background:#fff;border:0.6px solid #ababab;box-sizing:border-box;"></div>
<div class="r" style="left:742.00px;top:133.60px;width:8.60px;height:8.60px;background:#fff;border:0.6px solid #ababab;box-sizing:border-box;"></div>
<svg style="left:744px;top:127.5px" width="5" height="4" viewBox="0 0 5 4"><path d="M0.3 3.3 L2.5 0.6 L4.7 3.3 Z" fill="#555"/></svg>
<div class="r" style="left:742.00px;top:389.90px;width:8.60px;height:3.80px;background:#fff;border:0.6px solid #ababab;box-sizing:border-box;"></div>
<svg style="left:239px;top:126.6px" width="7.6" height="6.6" viewBox="0 0 7.6 6.6"><path d="M7.6 0 L7.6 6.6 L0 6.6 Z" fill="#b4b4b4"/></svg>
<svg style="left:336.2px;top:192.3px" width="8.8" height="8.6" viewBox="0 0 8.8 8.6"><path d="M3 0.7 H5.8 V2.9 H8.1 V5.7 H5.8 V7.9 H3 V5.7 H0.7 V2.9 H3 Z" fill="#fff" stroke="#111" stroke-width="1.3" stroke-linejoin="round"/></svg>
</div>
</body></html>
